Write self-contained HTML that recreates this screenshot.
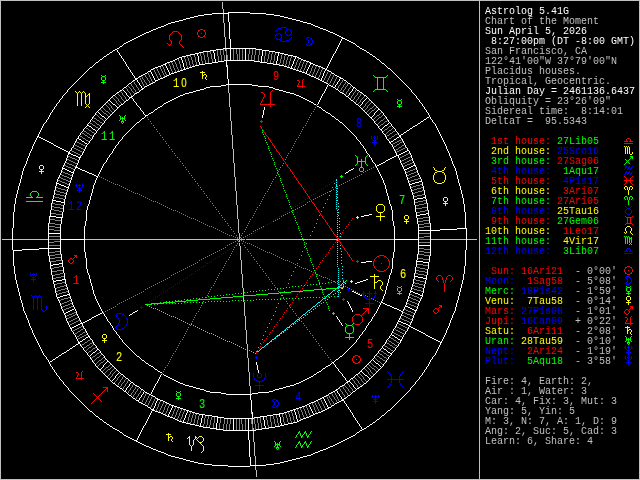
<!DOCTYPE html>
<html><head><meta charset="utf-8"><title>Astrolog 5.41G</title>
<style>
html,body{margin:0;padding:0;background:#000;overflow:hidden}
#w{position:relative;width:640px;height:480px;background:#000;overflow:hidden}
#w svg{position:absolute;left:0;top:0}
#sb{position:absolute;left:485px;top:7.3px;margin:0;font:10px/10px "Liberation Mono",monospace;white-space:pre;color:#c0c0c0;will-change:transform}
#sb div{height:10px}
.cw{color:#ffffff}.cl{color:#c0c0c0}.cr{color:#ff0000}.cy{color:#ffff00}.cgn{color:#00ff00}.cb{color:#0000ff}
.hn{font:13.6px "Liberation Mono",monospace;text-anchor:middle}.hs{font:12.8px "Liberation Sans",sans-serif}
</style></head><body><div id="w">
<svg width="640" height="480" viewBox="0 0 640 480">
<g transform="translate(0,.5)" fill="none" stroke-width="1" shape-rendering="crispEdges">
<path stroke="#ffffff" d="M228 12h22M212 13h17M250 13h16M204 14h8M228 14h1M266 14h8M198 15h6M228 15h1M274 15h6M194 16h4M228 16h1M280 16h4M190 17h4M228 17h1M284 17h4M186 18h4M228 18h1M288 18h4M183 19h3M228 19h1M292 19h4M179 20h4M228 20h1M296 20h4M175 21h4M228 21h1M300 21h3M171 22h4M229 22h1M303 22h4M168 23h3M229 23h1M307 23h4M166 24h2M229 24h1M311 24h2M164 25h2M229 25h1M313 25h2M161 26h3M229 26h1M315 26h3M158 27h3M229 27h1M318 27h2M156 28h2M229 28h1M320 28h3M153 29h3M229 29h1M323 29h3M151 30h2M229 30h1M326 30h2M149 31h2M229 31h1M328 31h2M146 32h3M229 32h1M330 32h3M144 33h2M229 33h1M333 33h2M142 34h2M229 34h1M335 34h2M140 35h2M229 35h1M337 35h2M138 36h2M229 36h1M339 36h2M136 37h2M229 37h1M341 37h2M134 38h2M229 38h1M342 38h3M132 39h2M230 39h1M341 39h1M345 39h2M130 40h2M230 40h1M341 40h1M347 40h2M128 41h2M230 41h1M340 41h1M349 41h2M126 42h2M230 42h1M340 42h1M351 42h2M124 43h2M230 43h1M339 43h1M353 43h2M123 44h1M230 44h1M339 44h1M355 44h1M122 45h1M230 45h1M338 45h1M356 45h1M120 46h2M230 46h1M338 46h1M357 46h2M119 47h1M230 47h1M337 47h1M359 47h1M117 48h2M223 48h33M337 48h1M360 48h2M115 49h2M216 49h7M230 49h1M245 49h1M256 49h6M336 49h1M362 49h2M113 50h2M117 50h1M210 50h6M230 50h1M245 50h1M262 50h7M336 50h1M364 50h2M112 51h1M117 51h1M203 51h7M213 51h1M230 51h1M245 51h1M262 51h1M269 51h6M335 51h1M366 51h1M110 52h2M118 52h1M199 52h4M213 52h1M230 52h1M245 52h1M262 52h1M275 52h5M335 52h1M367 52h2M109 53h1M119 53h1M195 53h4M214 53h1M230 53h1M245 53h1M262 53h1M278 53h1M280 53h4M334 53h1M369 53h1M107 54h2M119 54h1M190 54h5M197 54h1M214 54h1M230 54h1M245 54h1M262 54h1M278 54h1M284 54h4M333 54h1M370 54h2M106 55h1M120 55h1M186 55h4M197 55h1M214 55h1M230 55h1M245 55h1M262 55h1M278 55h1M288 55h5M333 55h1M372 55h1M104 56h2M121 56h1M182 56h4M198 56h1M214 56h1M230 56h1M245 56h1M261 56h1M277 56h1M293 56h4M332 56h1M373 56h2M103 57h1M121 57h1M179 57h3M198 57h1M214 57h1M230 57h1M245 57h1M261 57h1M277 57h1M295 57h1M297 57h2M332 57h1M375 57h1M102 58h1M122 58h1M177 58h2M181 58h1M198 58h1M214 58h1M230 58h1M245 58h1M261 58h1M277 58h1M295 58h1M299 58h2M331 58h1M376 58h1M100 59h2M123 59h1M175 59h2M181 59h1M198 59h1M215 59h1M230 59h1M245 59h1M261 59h1M277 59h1M294 59h1M301 59h2M331 59h1M377 59h2M99 60h1M123 60h1M173 60h2M182 60h1M198 60h1M215 60h1M224 60h30M261 60h1M277 60h1M294 60h1M303 60h3M330 60h1M379 60h1M98 61h1M124 61h1M170 61h3M182 61h1M198 61h1M215 61h1M218 61h6M226 61h1M254 61h6M261 61h1M276 61h1M293 61h1M306 61h3M330 61h1M380 61h1M96 62h2M125 62h1M167 62h3M182 62h1M199 62h1M212 62h6M226 62h1M260 62h7M276 62h1M293 62h1M309 62h2M329 62h1M381 62h1M95 63h1M125 63h1M165 63h2M183 63h1M199 63h1M205 63h7M226 63h1M267 63h6M276 63h1M293 63h1M310 63h3M329 63h1M382 63h2M94 64h1M126 64h1M163 64h3M183 64h1M199 64h6M226 64h1M273 64h6M292 64h1M310 64h1M313 64h2M328 64h1M384 64h1M93 65h1M126 65h1M161 65h2M165 65h1M183 65h1M195 65h4M226 65h1M279 65h5M292 65h1M309 65h1M315 65h3M328 65h1M385 65h1M92 66h1M127 66h1M158 66h3M166 66h1M183 66h1M192 66h3M226 66h1M284 66h3M291 66h1M309 66h1M318 66h3M327 66h1M386 66h1M90 67h2M128 67h1M155 67h3M166 67h1M184 67h1M189 67h3M227 67h1M287 67h3M291 67h1M308 67h1M321 67h2M327 67h1M387 67h1M89 68h1M128 68h1M153 68h2M167 68h1M184 68h1M186 68h3M227 68h1M290 68h3M308 68h1M323 68h2M326 68h1M388 68h2M88 69h1M129 69h1M151 69h2M167 69h1M183 69h3M227 69h1M293 69h3M307 69h1M325 69h2M390 69h1M87 70h1M130 70h1M150 70h1M168 70h1M180 70h3M227 70h1M296 70h3M307 70h1M325 70h1M327 70h2M391 70h1M86 71h1M130 71h1M148 71h3M168 71h1M177 71h3M227 71h1M299 71h3M306 71h1M324 71h1M329 71h2M392 71h1M85 72h1M131 72h1M147 72h1M151 72h1M169 72h1M174 72h3M227 72h1M302 72h3M306 72h1M324 72h1M331 72h1M393 72h1M84 73h1M132 73h1M145 73h2M151 73h1M169 73h1M171 73h3M227 73h1M305 73h2M323 73h1M332 73h2M394 73h1M83 74h1M132 74h1M143 74h2M152 74h1M169 74h2M227 74h1M307 74h2M323 74h1M334 74h1M395 74h1M82 75h1M133 75h1M141 75h2M152 75h1M167 75h2M227 75h1M309 75h2M323 75h1M335 75h2M396 75h1M81 76h1M134 76h1M139 76h2M153 76h1M165 76h2M227 76h1M311 76h3M322 76h1M337 76h2M397 76h1M80 77h1M134 77h1M138 77h1M153 77h1M163 77h2M227 77h1M314 77h2M322 77h1M339 77h2M398 77h1M79 78h1M135 78h3M154 78h1M160 78h3M227 78h1M316 78h2M321 78h1M340 78h3M399 78h1M78 79h1M135 79h2M154 79h1M158 79h2M228 79h1M318 79h2M321 79h1M339 79h1M343 79h1M400 79h1M77 80h1M133 80h2M137 80h1M155 80h3M228 80h1M320 80h2M339 80h1M344 80h2M401 80h1M76 81h1M132 81h1M137 81h1M155 81h1M228 81h1M322 81h2M338 81h1M346 81h1M402 81h1M75 82h1M131 82h1M138 82h1M153 82h2M228 82h1M324 82h2M337 82h1M347 82h1M403 82h1M74 83h1M129 83h2M139 83h1M151 83h2M228 83h1M326 83h2M337 83h1M348 83h2M404 83h1M73 84h1M128 84h1M139 84h1M149 84h2M226 84h26M328 84h1M336 84h1M350 84h1M405 84h1M72 85h1M127 85h1M140 85h1M147 85h2M221 85h5M252 85h6M327 85h1M329 85h2M335 85h1M351 85h1M406 85h1M71 86h1M126 86h1M141 86h1M145 86h2M210 86h11M258 86h11M327 86h1M331 86h2M335 86h1M352 86h1M407 86h1M70 87h1M124 87h2M141 87h1M144 87h1M206 87h4M269 87h4M326 87h1M333 87h2M353 87h2M408 87h1M69 88h1M123 88h1M142 88h2M204 88h2M273 88h2M326 88h1M335 88h1M353 88h1M355 88h1M409 88h1M68 89h1M122 89h1M141 89h2M200 89h4M275 89h4M325 89h1M336 89h2M352 89h1M356 89h1M410 89h1M67 90h1M120 90h2M123 90h1M140 90h1M196 90h4M279 90h4M325 90h1M338 90h1M352 90h1M357 90h2M411 90h1M67 91h1M119 91h1M124 91h1M139 91h1M193 91h3M283 91h3M324 91h1M339 91h1M351 91h1M359 91h1M411 91h1M66 92h1M117 92h2M125 92h1M137 92h2M189 92h4M286 92h4M324 92h1M340 92h2M350 92h1M360 92h2M412 92h1M65 93h1M116 93h1M126 93h1M135 93h2M185 93h4M290 93h4M323 93h1M342 93h2M349 93h1M362 93h1M413 93h1M64 94h1M115 94h1M126 94h1M134 94h1M183 94h2M294 94h2M322 94h1M344 94h1M349 94h1M363 94h1M414 94h1M63 95h1M113 95h2M127 95h1M133 95h1M180 95h3M296 95h3M322 95h1M345 95h1M348 95h1M364 95h2M415 95h1M62 96h1M112 96h1M128 96h1M131 96h2M178 96h2M299 96h2M321 96h1M346 96h2M366 96h1M416 96h1M62 97h1M111 97h1M129 97h3M176 97h2M301 97h2M321 97h1M348 97h1M367 97h1M416 97h1M61 98h1M110 98h1M129 98h1M132 98h1M174 98h2M303 98h2M320 98h1M349 98h1M366 98h1M368 98h1M417 98h1M60 99h1M109 99h1M128 99h1M133 99h1M172 99h2M305 99h2M320 99h1M350 99h1M365 99h1M369 99h1M418 99h1M59 100h1M108 100h2M126 100h2M133 100h1M170 100h2M307 100h2M319 100h1M351 100h2M364 100h1M370 100h1M419 100h1M59 101h1M107 101h1M110 101h1M125 101h1M134 101h1M168 101h2M309 101h2M319 101h1M353 101h1M363 101h1M371 101h1M419 101h1M58 102h1M106 102h1M111 102h1M124 102h1M135 102h1M166 102h2M311 102h2M318 102h1M354 102h1M362 102h1M372 102h1M420 102h1M57 103h1M105 103h1M112 103h1M123 103h1M136 103h1M164 103h2M313 103h1M318 103h1M355 103h1M362 103h1M373 103h1M421 103h1M56 104h1M104 104h1M113 104h2M121 104h2M136 104h1M163 104h1M314 104h2M317 104h1M356 104h2M361 104h1M374 104h1M422 104h1M56 105h1M103 105h1M115 105h1M120 105h1M137 105h1M162 105h1M358 105h1M360 105h1M375 105h1M422 105h1M55 106h1M102 106h1M116 106h1M119 106h1M138 106h1M160 106h2M317 106h2M359 106h1M376 106h1M423 106h1M54 107h1M101 107h1M117 107h2M139 107h1M158 107h2M264 107h1M319 107h2M360 107h1M377 107h1M424 107h1M54 108h1M100 108h1M117 108h1M140 108h1M157 108h1M264 108h1M321 108h1M361 108h1M378 108h1M424 108h1M53 109h1M99 109h1M116 109h1M140 109h1M155 109h2M264 109h1M322 109h1M362 109h1M378 109h2M425 109h1M52 110h1M98 110h1M115 110h1M141 110h1M154 110h1M263 110h1M323 110h2M363 110h1M377 110h1M380 110h1M426 110h1M52 111h1M97 111h1M114 111h1M142 111h1M153 111h1M263 111h1M325 111h1M364 111h1M376 111h1M381 111h1M426 111h1M51 112h1M96 112h1M98 112h1M113 112h1M143 112h1M151 112h2M263 112h1M326 112h2M365 112h1M375 112h1M382 112h1M427 112h1M50 113h1M95 113h1M99 113h1M112 113h1M143 113h1M149 113h2M263 113h1M328 113h2M366 113h1M374 113h1M383 113h1M428 113h1M50 114h1M95 114h1M100 114h1M111 114h1M144 114h1M148 114h1M263 114h1M330 114h1M367 114h1M374 114h1M383 114h1M428 114h1M49 115h1M94 115h1M101 115h1M110 115h1M145 115h3M262 115h1M331 115h1M368 115h1M373 115h1M384 115h1M429 115h1M49 116h1M93 116h1M102 116h2M109 116h1M145 116h1M262 116h1M332 116h2M369 116h1M372 116h1M385 116h1M429 116h1M48 117h1M92 117h1M104 117h1M108 117h1M144 117h1M262 117h1M334 117h1M370 117h2M386 117h1M427 117h2M430 117h1M48 118h1M92 118h1M105 118h1M107 118h1M142 118h2M335 118h1M371 118h1M386 118h1M426 118h1M430 118h1M47 119h1M91 119h1M106 119h1M141 119h1M336 119h2M372 119h1M387 119h1M424 119h2M431 119h1M46 120h1M90 120h1M105 120h1M140 120h1M338 120h1M373 120h1M388 120h1M423 120h1M432 120h1M46 121h1M90 121h1M104 121h1M139 121h1M339 121h1M374 121h1M388 121h1M421 121h2M432 121h1M45 122h1M89 122h1M104 122h1M137 122h2M340 122h2M374 122h1M389 122h1M420 122h1M433 122h1M44 123h1M88 123h1M103 123h1M136 123h1M342 123h1M375 123h1M388 123h1M390 123h1M418 123h2M434 123h1M43 124h1M87 124h1M102 124h1M135 124h1M343 124h1M376 124h1M387 124h1M391 124h1M417 124h1M435 124h1M43 125h1M87 125h2M101 125h1M134 125h1M344 125h1M377 125h1M385 125h2M391 125h1M415 125h2M435 125h1M42 126h1M86 126h1M89 126h2M100 126h1M133 126h1M345 126h1M378 126h1M384 126h1M392 126h1M413 126h2M436 126h1M42 127h1M85 127h1M91 127h1M100 127h1M132 127h1M346 127h1M378 127h1M383 127h1M393 127h1M412 127h1M436 127h1M41 128h1M84 128h1M92 128h1M99 128h1M131 128h1M347 128h1M379 128h1M382 128h1M394 128h1M410 128h2M437 128h1M41 129h1M83 129h1M93 129h2M98 129h1M130 129h1M348 129h1M380 129h2M395 129h1M409 129h1M437 129h1M40 130h1M83 130h1M95 130h1M97 130h1M129 130h1M349 130h1M381 130h1M395 130h1M407 130h2M438 130h1M40 131h1M82 131h1M96 131h1M128 131h1M350 131h1M382 131h1M396 131h1M406 131h1M438 131h1M39 132h1M81 132h1M96 132h1M127 132h1M351 132h1M382 132h1M397 132h1M404 132h2M439 132h1M39 133h1M80 133h1M95 133h1M126 133h1M352 133h1M383 133h1M398 133h1M403 133h1M439 133h1M38 134h1M80 134h1M94 134h1M125 134h1M353 134h1M384 134h1M398 134h1M401 134h2M440 134h1M38 135h1M79 135h1M93 135h1M124 135h1M354 135h1M385 135h1M399 135h2M440 135h1M37 136h2M78 136h1M93 136h1M123 136h1M355 136h1M385 136h1M399 136h2M441 136h1M37 137h1M39 137h2M78 137h1M92 137h1M122 137h1M356 137h1M386 137h1M397 137h2M400 137h1M441 137h1M36 138h1M41 138h2M77 138h2M92 138h1M122 138h1M356 138h1M386 138h1M396 138h1M401 138h1M442 138h1M36 139h1M43 139h2M76 139h1M79 139h2M91 139h1M121 139h1M357 139h1M387 139h1M394 139h2M402 139h1M442 139h1M35 140h1M45 140h2M76 140h1M81 140h1M90 140h1M120 140h1M358 140h1M388 140h1M393 140h1M402 140h1M443 140h1M35 141h1M47 141h2M75 141h1M82 141h2M89 141h1M119 141h1M359 141h1M389 141h1M391 141h2M403 141h1M443 141h1M34 142h1M49 142h2M75 142h1M84 142h1M89 142h1M118 142h1M360 142h1M389 142h2M403 142h1M444 142h1M34 143h1M51 143h2M74 143h1M85 143h2M88 143h1M118 143h1M360 143h1M390 143h1M404 143h1M444 143h1M33 144h1M53 144h1M74 144h1M87 144h1M117 144h1M361 144h1M391 144h1M404 144h1M445 144h1M33 145h1M54 145h2M73 145h1M86 145h1M116 145h1M362 145h1M392 145h1M405 145h1M445 145h1M32 146h1M56 146h2M73 146h1M86 146h1M115 146h1M363 146h1M392 146h1M405 146h1M446 146h1M32 147h1M58 147h2M72 147h1M85 147h1M115 147h1M363 147h1M393 147h1M406 147h1M446 147h1M32 148h1M60 148h2M71 148h1M85 148h1M114 148h1M364 148h1M393 148h1M407 148h1M446 148h1M31 149h1M62 149h2M71 149h1M84 149h1M113 149h1M365 149h1M394 149h1M407 149h1M447 149h1M31 150h1M64 150h2M70 150h1M84 150h1M113 150h1M365 150h1M394 150h1M407 150h2M447 150h1M30 151h1M66 151h2M69 151h1M83 151h1M112 151h1M366 151h1M395 151h1M405 151h2M409 151h1M448 151h1M30 152h1M68 152h2M83 152h1M112 152h1M366 152h1M395 152h1M403 152h2M409 152h1M448 152h1M29 153h1M68 153h3M82 153h1M111 153h1M367 153h1M396 153h1M401 153h2M410 153h1M449 153h1M29 154h1M68 154h1M71 154h2M82 154h1M110 154h1M368 154h1M396 154h1M399 154h2M410 154h1M449 154h1M29 155h1M67 155h1M73 155h3M81 155h1M109 155h1M369 155h1M396 155h3M411 155h1M449 155h1M28 156h1M67 156h1M76 156h2M80 156h1M109 156h1M369 156h1M394 156h2M398 156h1M411 156h1M450 156h1M28 157h1M67 157h1M78 157h3M108 157h1M370 157h1M392 157h2M398 157h1M411 157h1M450 157h1M27 158h1M66 158h1M79 158h1M107 158h1M371 158h1M390 158h2M399 158h1M412 158h1M451 158h1M27 159h1M66 159h1M79 159h1M107 159h1M371 159h1M388 159h2M399 159h1M412 159h1M451 159h1M27 160h1M66 160h1M78 160h1M106 160h1M372 160h1M386 160h2M400 160h1M412 160h1M451 160h1M26 161h1M65 161h1M78 161h1M106 161h1M372 161h1M385 161h1M400 161h1M413 161h1M452 161h1M26 162h1M65 162h1M78 162h1M105 162h1M373 162h1M383 162h2M400 162h1M413 162h1M452 162h1M26 163h1M64 163h1M77 163h1M104 163h1M374 163h1M381 163h2M401 163h1M414 163h1M452 163h1M25 164h1M64 164h1M77 164h1M103 164h1M375 164h1M379 164h2M401 164h1M414 164h1M453 164h1M25 165h1M63 165h1M76 165h1M103 165h1M375 165h1M377 165h2M402 165h1M413 165h3M453 165h1M24 166h1M63 166h1M76 166h1M102 166h1M376 166h1M402 166h1M411 166h2M415 166h1M454 166h1M24 167h1M62 167h1M75 167h3M102 167h1M376 167h1M403 167h1M409 167h2M416 167h1M454 167h1M23 168h1M62 168h3M75 168h1M78 168h2M101 168h1M353 168h1M377 168h1M403 168h1M407 168h2M416 168h1M455 168h1M23 169h1M62 169h1M65 169h2M74 169h1M80 169h2M101 169h1M351 169h2M377 169h1M404 169h3M416 169h1M455 169h1M23 170h1M61 170h1M67 170h2M74 170h1M82 170h3M100 170h1M349 170h2M378 170h1M404 170h1M417 170h1M455 170h1M22 171h1M61 171h1M69 171h2M73 171h1M85 171h2M100 171h1M348 171h1M378 171h1M405 171h1M417 171h1M456 171h1M22 172h1M61 172h1M71 172h3M87 172h2M99 172h1M346 172h2M379 172h1M405 172h1M417 172h1M456 172h1M22 173h1M60 173h1M73 173h1M89 173h3M99 173h1M345 173h1M379 173h1M405 173h1M418 173h1M456 173h1M22 174h1M60 174h1M72 174h1M92 174h2M98 174h1M380 174h1M406 174h1M418 174h1M456 174h1M21 175h1M59 175h1M72 175h1M94 175h2M98 175h1M380 175h1M406 175h1M419 175h1M457 175h1M21 176h1M59 176h1M72 176h1M96 176h2M381 176h1M406 176h1M419 176h1M457 176h1M21 177h1M58 177h1M71 177h1M97 177h1M381 177h1M407 177h1M420 177h1M457 177h1M21 178h1M58 178h1M71 178h1M96 178h1M382 178h1M407 178h1M420 178h1M457 178h1M20 179h1M57 179h1M71 179h1M96 179h1M382 179h1M407 179h1M421 179h1M458 179h1M20 180h1M57 180h1M70 180h1M95 180h1M383 180h1M408 180h1M421 180h1M458 180h1M20 181h1M57 181h1M70 181h1M95 181h1M383 181h1M408 181h1M419 181h3M458 181h1M20 182h1M56 182h1M70 182h1M95 182h1M383 182h1M408 182h1M415 182h4M422 182h1M458 182h1M19 183h1M56 183h3M69 183h1M94 183h1M384 183h1M409 183h1M412 183h3M422 183h1M459 183h1M19 184h1M56 184h1M59 184h2M69 184h1M94 184h1M384 184h1M409 184h3M422 184h1M459 184h1M19 185h1M56 185h1M61 185h3M69 185h1M93 185h1M385 185h1M409 185h1M422 185h1M459 185h1M18 186h1M55 186h1M64 186h2M68 186h1M93 186h1M385 186h1M410 186h1M423 186h1M460 186h1M18 187h1M55 187h1M66 187h3M93 187h1M385 187h1M410 187h1M423 187h1M460 187h1M18 188h1M55 188h1M68 188h1M93 188h1M385 188h1M410 188h1M423 188h1M460 188h1M18 189h1M55 189h1M67 189h1M92 189h1M386 189h1M411 189h1M423 189h1M460 189h1M17 190h1M54 190h1M67 190h1M92 190h1M386 190h1M411 190h1M424 190h1M461 190h1M17 191h1M54 191h1M67 191h1M92 191h1M386 191h1M411 191h1M424 191h1M461 191h1M17 192h1M54 192h1M66 192h1M92 192h1M386 192h1M412 192h1M424 192h1M461 192h1M17 193h1M54 193h1M66 193h1M91 193h1M387 193h1M412 193h1M424 193h1M461 193h1M16 194h1M54 194h1M66 194h1M91 194h1M387 194h1M412 194h1M424 194h1M462 194h1M16 195h1M53 195h1M65 195h1M91 195h1M387 195h1M413 195h1M425 195h1M462 195h1M16 196h1M53 196h1M65 196h1M90 196h1M388 196h1M413 196h1M425 196h1M462 196h1M16 197h1M53 197h1M65 197h1M90 197h1M388 197h1M413 197h1M423 197h3M462 197h1M15 198h1M53 198h1M65 198h1M90 198h1M388 198h1M413 198h1M417 198h6M425 198h1M463 198h1M15 199h1M52 199h1M64 199h1M90 199h1M388 199h1M414 199h3M426 199h1M463 199h1M15 200h1M52 200h4M64 200h1M89 200h1M389 200h1M414 200h1M426 200h1M463 200h1M15 201h1M52 201h1M56 201h5M64 201h1M89 201h1M389 201h1M414 201h1M426 201h1M463 201h1M15 202h1M52 202h1M61 202h4M89 202h1M389 202h1M414 202h1M426 202h1M463 202h1M15 203h1M51 203h1M64 203h1M89 203h1M389 203h1M414 203h1M427 203h1M463 203h1M14 204h1M51 204h1M64 204h1M88 204h1M390 204h1M414 204h1M427 204h1M464 204h1M14 205h1M51 205h1M63 205h1M88 205h1M390 205h1M415 205h1M427 205h1M464 205h1M14 206h1M51 206h1M63 206h1M87 206h1M391 206h1M415 206h1M427 206h1M464 206h1M14 207h1M51 207h1M63 207h1M87 207h1M391 207h1M415 207h1M427 207h1M464 207h1M14 208h1M51 208h1M63 208h1M87 208h1M391 208h1M415 208h1M427 208h1M464 208h1M14 209h1M51 209h1M63 209h1M87 209h1M391 209h1M415 209h1M427 209h1M464 209h1M14 210h1M50 210h1M63 210h1M86 210h1M392 210h1M415 210h1M428 210h1M464 210h1M14 211h1M50 211h1M63 211h1M86 211h1M392 211h1M415 211h1M428 211h1M464 211h1M13 212h1M50 212h1M62 212h1M86 212h1M392 212h1M416 212h1M428 212h1M465 212h1M13 213h1M50 213h1M62 213h1M86 213h1M392 213h1M416 213h1M426 213h3M465 213h1M13 214h1M50 214h1M62 214h1M86 214h1M369 214h3M392 214h1M416 214h1M420 214h6M428 214h1M465 214h1M13 215h1M50 215h1M62 215h1M86 215h1M364 215h5M392 215h1M416 215h4M428 215h1M465 215h1M13 216h1M49 216h7M62 216h1M86 216h1M361 216h3M392 216h1M416 216h1M429 216h1M465 216h1M13 217h1M49 217h1M56 217h7M86 217h1M392 217h1M416 217h1M429 217h1M465 217h1M13 218h1M49 218h1M61 218h1M86 218h1M392 218h1M417 218h1M429 218h1M465 218h1M13 219h1M49 219h1M61 219h1M86 219h1M392 219h1M417 219h1M429 219h1M465 219h1M13 220h1M49 220h1M61 220h1M86 220h1M392 220h1M417 220h1M429 220h1M465 220h1M13 221h1M49 221h1M61 221h1M85 221h1M393 221h1M417 221h1M429 221h1M465 221h1M13 222h1M49 222h1M61 222h1M85 222h1M393 222h1M417 222h1M429 222h1M465 222h1M13 223h1M48 223h1M61 223h1M85 223h1M393 223h1M417 223h1M430 223h1M465 223h1M13 224h1M48 224h1M60 224h1M85 224h1M393 224h1M418 224h1M430 224h1M465 224h1M13 225h1M48 225h1M60 225h1M85 225h1M393 225h1M418 225h1M430 225h1M465 225h1M13 226h1M48 226h1M60 226h1M84 226h1M394 226h1M418 226h1M430 226h1M465 226h1M13 227h1M48 227h1M60 227h1M84 227h1M394 227h1M418 227h1M430 227h1M465 227h1M12 228h1M48 228h1M60 228h1M84 228h1M394 228h1M418 228h1M430 228h1M457 228h10M12 229h1M48 229h1M60 229h1M84 229h1M394 229h1M418 229h1M430 229h1M440 229h17M466 229h1M12 230h1M48 230h1M60 230h1M84 230h1M394 230h1M418 230h22M466 230h1M12 231h1M48 231h1M60 231h1M84 231h1M394 231h1M418 231h1M430 231h1M466 231h1M12 232h1M48 232h1M60 232h1M84 232h1M394 232h1M418 232h1M430 232h1M466 232h1M12 233h1M48 233h13M84 233h1M394 233h1M418 233h1M430 233h1M466 233h1M12 234h1M48 234h1M60 234h1M84 234h1M394 234h1M418 234h1M430 234h1M466 234h1M12 235h1M48 235h1M60 235h1M84 235h1M394 235h1M418 235h1M430 235h1M466 235h1M12 236h1M48 236h1M60 236h1M84 236h1M394 236h1M418 236h1M430 236h1M466 236h1M12 237h1M48 237h1M60 237h1M84 237h1M394 237h1M418 237h1M430 237h1M466 237h1M12 238h1M48 238h1M60 238h1M84 238h1M394 238h1M418 238h1M430 238h1M466 238h1M12 239h1M48 239h1M60 239h25M394 239h25M430 239h1M466 239h1M12 240h1M48 240h1M60 240h1M84 240h1M394 240h1M418 240h1M430 240h1M466 240h1M12 241h1M48 241h1M60 241h1M84 241h1M394 241h1M418 241h1M430 241h1M466 241h1M12 242h1M48 242h1M60 242h1M84 242h1M394 242h1M418 242h1M430 242h1M466 242h1M12 243h1M48 243h1M60 243h1M84 243h1M394 243h1M418 243h1M430 243h1M466 243h1M12 244h1M48 244h1M60 244h1M84 244h1M394 244h1M418 244h1M430 244h1M466 244h1M12 245h1M48 245h1M60 245h1M84 245h1M394 245h1M418 245h13M466 245h1M12 246h1M48 246h1M60 246h1M84 246h1M394 246h1M418 246h1M430 246h1M466 246h1M12 247h1M48 247h1M60 247h1M84 247h1M394 247h1M418 247h1M430 247h1M466 247h1M12 248h1M39 248h22M84 248h1M394 248h1M418 248h1M430 248h1M466 248h1M12 249h1M22 249h17M48 249h1M60 249h1M84 249h1M394 249h1M418 249h1M430 249h1M466 249h1M13 250h9M48 250h1M60 250h1M84 250h1M394 250h1M418 250h1M430 250h1M465 250h1M13 251h1M48 251h1M60 251h1M84 251h1M394 251h1M418 251h1M430 251h1M465 251h1M13 252h1M48 252h1M60 252h1M85 252h1M393 252h1M418 252h1M430 252h1M465 252h1M13 253h1M48 253h1M60 253h1M85 253h1M393 253h1M418 253h1M430 253h1M465 253h1M13 254h1M48 254h1M61 254h1M85 254h1M393 254h1M417 254h1M430 254h1M465 254h1M13 255h1M48 255h1M61 255h1M85 255h1M393 255h1M417 255h1M430 255h1M465 255h1M13 256h1M49 256h1M61 256h1M85 256h1M393 256h1M417 256h1M429 256h1M465 256h1M13 257h1M49 257h1M61 257h1M85 257h1M393 257h1M417 257h1M429 257h1M465 257h1M13 258h1M49 258h1M61 258h1M86 258h1M392 258h1M417 258h1M429 258h1M465 258h1M13 259h1M49 259h1M61 259h1M86 259h1M392 259h1M417 259h1M429 259h1M465 259h1M13 260h1M49 260h1M62 260h1M86 260h1M392 260h1M416 260h1M429 260h1M465 260h1M13 261h1M49 261h1M62 261h1M86 261h1M366 261h6M392 261h1M416 261h7M429 261h1M465 261h1M13 262h1M50 262h1M62 262h1M86 262h1M361 262h5M392 262h1M416 262h1M423 262h6M465 262h1M13 263h1M50 263h1M59 263h4M86 263h1M392 263h1M416 263h1M428 263h1M465 263h1M13 264h1M50 264h1M53 264h6M62 264h1M86 264h1M392 264h1M416 264h1M428 264h1M465 264h1M13 265h1M50 265h3M62 265h1M86 265h1M392 265h1M416 265h1M428 265h1M465 265h1M14 266h1M50 266h1M62 266h1M86 266h1M392 266h1M416 266h1M428 266h1M464 266h1M14 267h1M50 267h1M63 267h1M86 267h1M392 267h1M415 267h1M428 267h1M464 267h1M14 268h1M50 268h1M63 268h1M86 268h1M392 268h1M415 268h1M428 268h1M464 268h1M14 269h1M51 269h1M63 269h1M87 269h1M391 269h1M415 269h1M427 269h1M464 269h1M14 270h1M51 270h1M63 270h1M87 270h1M391 270h1M415 270h1M427 270h1M464 270h1M14 271h1M51 271h1M63 271h1M87 271h1M391 271h1M415 271h1M427 271h1M464 271h1M14 272h1M51 272h1M63 272h1M87 272h1M391 272h1M415 272h1M427 272h1M464 272h1M14 273h1M51 273h1M64 273h1M88 273h1M390 273h1M414 273h1M427 273h1M464 273h1M15 274h1M51 274h1M64 274h1M88 274h1M390 274h1M414 274h1M427 274h1M463 274h1M15 275h1M52 275h1M64 275h1M89 275h1M389 275h1M414 275h1M426 275h1M463 275h1M15 276h1M52 276h1M64 276h1M89 276h1M389 276h1M414 276h4M426 276h1M463 276h1M15 277h1M52 277h1M64 277h1M89 277h1M389 277h1M414 277h1M418 277h5M426 277h1M463 277h1M15 278h1M52 278h1M64 278h1M89 278h1M389 278h1M414 278h1M423 278h4M463 278h1M15 279h1M52 279h1M62 279h4M90 279h1M366 279h2M388 279h1M413 279h1M426 279h1M463 279h1M16 280h1M53 280h1M56 280h6M65 280h1M90 280h1M363 280h3M388 280h1M413 280h1M425 280h1M462 280h1M16 281h1M53 281h3M65 281h1M90 281h1M360 281h3M388 281h1M413 281h1M425 281h1M462 281h1M16 282h1M53 282h1M65 282h1M90 282h1M357 282h3M388 282h1M413 282h1M425 282h1M462 282h1M16 283h1M53 283h1M65 283h1M91 283h1M355 283h2M387 283h1M413 283h1M425 283h1M462 283h1M17 284h1M54 284h1M66 284h1M91 284h1M387 284h1M412 284h1M424 284h1M461 284h1M17 285h1M54 285h1M66 285h1M91 285h1M387 285h1M412 285h1M424 285h1M461 285h1M17 286h1M54 286h1M66 286h1M92 286h1M386 286h1M412 286h1M424 286h1M461 286h1M17 287h1M54 287h1M67 287h1M92 287h1M386 287h1M411 287h1M424 287h1M461 287h1M18 288h1M55 288h1M67 288h1M92 288h1M386 288h1M411 288h1M423 288h1M460 288h1M18 289h1M55 289h1M67 289h1M92 289h1M386 289h1M411 289h1M423 289h1M460 289h1M18 290h1M55 290h1M68 290h1M93 290h1M385 290h1M410 290h1M423 290h1M460 290h1M18 291h1M55 291h1M68 291h1M93 291h1M352 291h2M385 291h1M410 291h3M423 291h1M460 291h1M19 292h1M55 292h1M68 292h1M93 292h1M354 292h2M385 292h1M410 292h1M413 292h2M423 292h1M459 292h1M19 293h1M56 293h1M69 293h1M93 293h1M356 293h2M385 293h1M409 293h1M415 293h3M422 293h1M459 293h1M19 294h1M56 294h1M67 294h3M94 294h1M358 294h2M384 294h1M409 294h1M418 294h2M422 294h1M459 294h1M19 295h1M56 295h1M63 295h4M69 295h1M94 295h1M360 295h2M384 295h1M409 295h1M420 295h3M459 295h1M20 296h1M56 296h1M60 296h3M70 296h1M95 296h1M383 296h1M408 296h1M422 296h1M458 296h1M20 297h1M57 297h3M70 297h1M95 297h1M383 297h1M408 297h1M421 297h1M458 297h1M20 298h1M57 298h1M70 298h1M95 298h1M383 298h1M408 298h1M421 298h1M458 298h1M20 299h1M58 299h1M71 299h1M96 299h1M382 299h1M407 299h1M420 299h1M458 299h1M21 300h1M58 300h1M71 300h1M96 300h1M382 300h1M407 300h1M420 300h1M457 300h1M21 301h1M59 301h1M71 301h1M97 301h1M347 301h1M381 301h1M407 301h1M419 301h1M457 301h1M21 302h1M59 302h1M72 302h1M97 302h1M348 302h1M381 302h2M406 302h1M419 302h1M457 302h1M22 303h1M60 303h1M72 303h1M98 303h1M348 303h1M380 303h1M383 303h2M406 303h1M418 303h1M456 303h1M22 304h1M60 304h1M72 304h1M98 304h1M349 304h1M380 304h1M385 304h2M406 304h1M418 304h1M456 304h1M22 305h1M60 305h1M73 305h1M99 305h1M349 305h1M379 305h1M387 305h3M405 305h1M418 305h1M456 305h1M22 306h1M61 306h1M73 306h1M99 306h1M350 306h1M379 306h1M390 306h2M405 306h3M417 306h1M456 306h1M23 307h1M61 307h1M74 307h1M100 307h1M350 307h1M378 307h1M392 307h2M404 307h1M408 307h2M417 307h1M455 307h1M23 308h1M61 308h1M74 308h1M100 308h1M351 308h1M378 308h1M394 308h3M404 308h1M410 308h2M417 308h1M455 308h1M23 309h1M62 309h1M72 309h2M75 309h1M101 309h1M351 309h1M377 309h1M397 309h2M403 309h1M412 309h2M416 309h1M455 309h1M23 310h1M62 310h1M70 310h2M75 310h1M101 310h1M137 310h1M352 310h1M377 310h1M399 310h2M403 310h1M414 310h3M455 310h1M24 311h1M63 311h1M68 311h2M76 311h1M102 311h1M135 311h2M352 311h1M376 311h1M401 311h2M415 311h1M454 311h1M24 312h1M63 312h1M66 312h2M76 312h1M102 312h1M133 312h2M376 312h1M402 312h1M415 312h1M454 312h1M25 313h1M64 313h2M76 313h1M100 313h2M103 313h1M132 313h1M375 313h1M402 313h1M414 313h1M453 313h1M25 314h1M64 314h1M77 314h1M98 314h2M104 314h1M130 314h2M374 314h1M401 314h1M414 314h1M453 314h1M26 315h1M65 315h1M77 315h1M96 315h2M104 315h1M129 315h1M374 315h1M401 315h1M413 315h1M452 315h1M26 316h1M65 316h1M78 316h1M94 316h2M105 316h1M336 316h1M373 316h1M400 316h1M413 316h1M452 316h1M26 317h1M65 317h1M78 317h1M92 317h2M106 317h1M337 317h1M372 317h1M400 317h1M413 317h1M452 317h1M27 318h1M66 318h1M79 318h1M91 318h1M106 318h1M337 318h1M372 318h1M399 318h1M412 318h1M451 318h1M27 319h1M66 319h1M79 319h1M89 319h2M107 319h1M338 319h1M371 319h1M399 319h1M412 319h1M451 319h1M28 320h1M66 320h1M80 320h1M87 320h2M107 320h1M339 320h1M371 320h1M398 320h1M412 320h1M450 320h1M28 321h1M67 321h1M80 321h1M85 321h2M108 321h1M339 321h1M370 321h1M398 321h3M411 321h1M450 321h1M28 322h1M67 322h1M81 322h1M83 322h2M109 322h1M340 322h1M369 322h1M397 322h1M401 322h2M411 322h1M450 322h1M29 323h1M68 323h1M80 323h3M110 323h1M341 323h1M368 323h1M397 323h1M403 323h3M410 323h1M449 323h1M29 324h1M68 324h1M78 324h2M82 324h1M110 324h1M341 324h1M368 324h1M396 324h1M406 324h2M410 324h1M449 324h1M29 325h1M69 325h1M76 325h2M82 325h1M111 325h1M342 325h1M367 325h1M396 325h1M408 325h2M449 325h1M30 326h1M69 326h1M74 326h2M83 326h1M112 326h1M366 326h1M395 326h1M409 326h2M448 326h1M30 327h1M70 327h1M72 327h2M83 327h1M112 327h1M366 327h1M395 327h1M408 327h1M411 327h2M448 327h1M31 328h1M70 328h2M84 328h1M113 328h1M365 328h1M394 328h1M408 328h1M413 328h2M447 328h1M31 329h1M71 329h1M85 329h1M113 329h1M365 329h1M393 329h1M407 329h1M415 329h2M447 329h1M32 330h1M71 330h1M85 330h1M114 330h1M364 330h1M393 330h1M407 330h1M417 330h2M446 330h1M32 331h1M72 331h1M86 331h1M115 331h1M363 331h1M392 331h1M406 331h1M419 331h2M446 331h1M32 332h1M73 332h1M86 332h1M116 332h1M362 332h1M392 332h1M405 332h1M421 332h2M446 332h1M33 333h1M73 333h1M87 333h1M116 333h1M362 333h1M391 333h1M405 333h1M423 333h2M445 333h1M33 334h1M74 334h1M87 334h1M117 334h1M361 334h1M391 334h1M404 334h1M425 334h1M445 334h1M34 335h1M75 335h1M88 335h1M118 335h1M360 335h1M390 335h1M392 335h2M403 335h1M426 335h2M444 335h1M34 336h1M75 336h1M88 336h2M119 336h1M359 336h1M389 336h1M394 336h1M403 336h1M428 336h2M444 336h1M35 337h1M76 337h1M86 337h2M89 337h1M119 337h1M359 337h1M389 337h1M395 337h2M402 337h1M430 337h2M443 337h1M35 338h1M76 338h1M85 338h1M90 338h1M120 338h1M358 338h1M388 338h1M397 338h1M402 338h1M432 338h2M443 338h1M36 339h1M77 339h1M83 339h2M91 339h1M121 339h1M357 339h1M387 339h1M398 339h2M401 339h1M434 339h2M442 339h1M36 340h1M77 340h1M82 340h1M92 340h1M122 340h1M356 340h1M386 340h1M400 340h2M436 340h2M442 340h1M37 341h1M78 341h1M80 341h2M92 341h1M122 341h1M356 341h1M386 341h1M400 341h1M438 341h2M441 341h1M37 342h1M78 342h2M93 342h1M123 342h1M355 342h1M385 342h1M400 342h1M440 342h2M38 343h1M78 343h2M93 343h1M124 343h1M354 343h1M385 343h1M399 343h1M440 343h1M38 344h1M76 344h2M80 344h1M94 344h1M125 344h1M353 344h1M384 344h1M398 344h1M440 344h1M39 345h1M75 345h1M80 345h1M95 345h1M126 345h1M352 345h1M383 345h1M398 345h1M439 345h1M39 346h1M73 346h2M81 346h1M96 346h1M127 346h1M351 346h1M382 346h1M397 346h1M439 346h1M40 347h1M72 347h1M82 347h1M96 347h1M128 347h1M350 347h1M382 347h1M396 347h1M438 347h1M40 348h1M70 348h2M83 348h1M97 348h1M129 348h1M349 348h1M381 348h1M383 348h1M395 348h1M438 348h1M41 349h1M69 349h1M83 349h1M97 349h2M130 349h1M348 349h1M380 349h1M384 349h2M395 349h1M437 349h1M41 350h1M67 350h2M84 350h1M96 350h1M99 350h1M131 350h1M347 350h1M379 350h1M386 350h1M394 350h1M437 350h1M42 351h1M66 351h1M85 351h1M95 351h1M100 351h1M132 351h1M346 351h1M378 351h1M387 351h1M393 351h1M436 351h1M42 352h1M64 352h2M86 352h1M93 352h2M100 352h1M133 352h1M345 352h1M378 352h1M388 352h2M392 352h1M436 352h1M43 353h1M62 353h2M87 353h1M92 353h1M101 353h1M134 353h1M344 353h1M377 353h1M390 353h2M435 353h1M43 354h1M61 354h1M87 354h1M91 354h1M102 354h1M135 354h1M343 354h1M376 354h1M391 354h1M435 354h1M44 355h1M59 355h2M88 355h1M90 355h1M103 355h1M136 355h1M342 355h1M375 355h1M390 355h1M434 355h1M45 356h1M58 356h1M89 356h1M104 356h1M137 356h2M340 356h2M374 356h1M389 356h1M433 356h1M46 357h1M56 357h2M90 357h1M104 357h1M139 357h1M339 357h1M374 357h1M388 357h1M432 357h1M46 358h1M55 358h1M90 358h1M105 358h1M140 358h1M338 358h1M373 358h1M388 358h1M432 358h1M47 359h1M53 359h2M91 359h1M106 359h1M141 359h1M336 359h2M372 359h1M387 359h1M431 359h1M48 360h1M52 360h1M92 360h1M107 360h1M142 360h2M335 360h1M371 360h1M373 360h1M386 360h1M430 360h1M48 361h1M50 361h2M92 361h1M107 361h2M144 361h1M334 361h1M370 361h1M374 361h1M386 361h1M430 361h1M49 362h1M93 362h1M106 362h1M109 362h1M145 362h1M256 362h1M332 362h2M369 362h1M375 362h1M385 362h1M429 362h1M49 363h1M94 363h1M105 363h1M110 363h1M146 363h2M256 363h1M331 363h1M333 363h1M368 363h1M376 363h2M384 363h1M429 363h1M50 364h1M95 364h1M104 364h1M111 364h1M148 364h1M256 364h1M330 364h1M334 364h1M367 364h1M378 364h1M383 364h1M428 364h1M50 365h1M95 365h1M103 365h1M112 365h1M149 365h2M257 365h1M328 365h2M335 365h1M366 365h1M379 365h1M383 365h1M428 365h1M51 366h1M96 366h1M103 366h1M113 366h1M151 366h2M257 366h1M326 366h2M335 366h1M365 366h1M380 366h1M382 366h1M427 366h1M52 367h1M97 367h1M102 367h1M114 367h1M153 367h1M257 367h1M325 367h1M336 367h1M364 367h1M381 367h1M426 367h1M52 368h1M98 368h1M101 368h1M115 368h1M154 368h1M257 368h1M323 368h2M337 368h1M363 368h1M380 368h1M426 368h1M53 369h1M99 369h2M116 369h1M155 369h2M257 369h1M322 369h1M338 369h1M362 369h1M379 369h1M425 369h1M54 370h1M100 370h1M117 370h1M157 370h1M258 370h1M321 370h1M338 370h1M361 370h1M378 370h1M424 370h1M54 371h1M101 371h1M118 371h1M158 371h2M258 371h1M319 371h2M339 371h1M360 371h2M377 371h1M424 371h1M55 372h1M102 372h1M119 372h1M160 372h2M258 372h1M317 372h2M340 372h1M359 372h1M362 372h1M376 372h1M423 372h1M56 373h1M103 373h1M118 373h1M120 373h1M316 373h1M341 373h1M358 373h1M363 373h1M375 373h1M422 373h1M56 374h1M104 374h1M117 374h1M121 374h2M161 374h1M163 374h1M314 374h2M342 374h1M356 374h2M364 374h1M374 374h1M422 374h1M57 375h1M105 375h1M116 375h1M123 375h1M160 375h1M164 375h2M313 375h1M342 375h1M355 375h1M365 375h2M373 375h1M421 375h1M58 376h1M106 376h1M115 376h1M124 376h1M160 376h1M166 376h2M311 376h2M343 376h1M354 376h1M367 376h1M372 376h1M420 376h1M59 377h1M107 377h1M115 377h1M125 377h1M159 377h1M168 377h2M309 377h2M344 377h1M353 377h1M368 377h1M371 377h1M419 377h1M59 378h1M108 378h1M114 378h1M126 378h2M159 378h1M170 378h2M307 378h2M345 378h1M351 378h2M369 378h2M419 378h1M60 379h1M109 379h1M113 379h1M128 379h1M158 379h1M172 379h2M305 379h2M345 379h1M350 379h1M369 379h1M418 379h1M61 380h1M110 380h1M112 380h1M129 380h1M158 380h1M174 380h2M303 380h2M346 380h1M349 380h1M368 380h1M417 380h1M62 381h1M111 381h1M130 381h1M157 381h1M176 381h2M301 381h2M347 381h3M367 381h1M416 381h1M63 382h1M112 382h1M131 382h2M157 382h1M178 382h2M299 382h2M346 382h2M350 382h1M366 382h1M415 382h1M63 383h1M113 383h2M130 383h1M133 383h1M156 383h1M180 383h3M296 383h3M345 383h1M351 383h1M364 383h2M415 383h1M64 384h1M115 384h1M129 384h1M134 384h1M155 384h1M183 384h2M294 384h2M344 384h1M352 384h1M363 384h1M414 384h1M65 385h1M116 385h1M129 385h1M135 385h2M155 385h1M185 385h4M290 385h4M342 385h2M353 385h1M362 385h1M413 385h1M66 386h1M117 386h2M128 386h1M137 386h2M154 386h1M189 386h4M286 386h4M340 386h2M353 386h1M360 386h2M412 386h1M67 387h1M119 387h1M127 387h1M139 387h1M154 387h1M193 387h3M283 387h3M339 387h1M354 387h1M359 387h1M411 387h1M68 388h1M120 388h2M126 388h1M140 388h1M153 388h1M196 388h4M279 388h4M338 388h1M355 388h1M357 388h2M410 388h1M68 389h1M122 389h1M126 389h1M141 389h2M153 389h1M200 389h4M275 389h4M336 389h2M356 389h1M410 389h1M69 390h1M123 390h1M125 390h1M143 390h1M152 390h1M204 390h2M273 390h2M335 390h2M355 390h1M409 390h1M70 391h1M124 391h2M144 391h1M152 391h1M206 391h4M269 391h4M333 391h2M337 391h1M353 391h2M408 391h1M71 392h1M126 392h1M143 392h1M145 392h2M151 392h1M210 392h11M258 392h11M331 392h2M337 392h1M352 392h1M407 392h1M72 393h1M127 393h1M143 393h1M147 393h2M151 393h1M221 393h5M252 393h6M329 393h2M338 393h1M351 393h1M406 393h1M73 394h1M128 394h1M142 394h1M149 394h2M226 394h26M328 394h1M339 394h1M350 394h1M405 394h1M74 395h1M129 395h2M141 395h1M151 395h2M250 395h1M326 395h2M339 395h1M348 395h2M404 395h1M75 396h1M131 396h1M141 396h1M153 396h2M250 396h1M324 396h2M340 396h1M347 396h1M403 396h1M76 397h1M132 397h1M140 397h1M155 397h1M250 397h1M322 397h2M341 397h1M346 397h1M402 397h1M77 398h1M133 398h2M139 398h1M156 398h2M250 398h1M320 398h2M323 398h1M341 398h1M344 398h2M401 398h1M78 399h1M135 399h1M139 399h1M157 399h3M250 399h1M318 399h2M324 399h1M342 399h2M400 399h1M79 400h1M136 400h3M157 400h1M160 400h3M251 400h1M316 400h2M324 400h1M341 400h3M399 400h1M80 401h1M138 401h1M156 401h1M163 401h2M251 401h1M314 401h2M325 401h1M339 401h2M344 401h1M398 401h1M81 402h1M139 402h2M156 402h1M165 402h2M251 402h1M311 402h3M325 402h1M337 402h2M344 402h1M397 402h1M82 403h1M141 403h2M155 403h1M167 403h2M251 403h1M309 403h2M326 403h1M335 403h2M345 403h1M396 403h1M83 404h1M143 404h2M155 404h1M169 404h2M251 404h1M307 404h2M326 404h1M334 404h1M346 404h1M395 404h1M84 405h1M145 405h2M155 405h1M171 405h3M251 405h1M305 405h2M309 405h1M327 405h1M332 405h2M346 405h1M394 405h1M85 406h1M147 406h1M154 406h1M172 406h1M174 406h3M251 406h1M302 406h3M309 406h1M327 406h1M331 406h1M347 406h1M393 406h1M86 407h1M148 407h2M154 407h1M172 407h1M177 407h3M251 407h1M299 407h3M310 407h1M328 407h3M348 407h1M392 407h1M87 408h1M150 408h1M153 408h1M171 408h1M180 408h3M251 408h1M296 408h3M310 408h1M327 408h2M348 408h1M391 408h1M88 409h1M151 409h3M171 409h1M183 409h3M251 409h1M293 409h3M311 409h1M325 409h2M349 409h1M390 409h1M89 410h1M152 410h3M170 410h1M186 410h3M251 410h1M290 410h3M294 410h1M311 410h1M323 410h2M350 410h1M388 410h2M90 411h2M151 411h1M155 411h3M170 411h1M187 411h1M189 411h3M251 411h1M287 411h3M294 411h1M312 411h1M321 411h2M350 411h1M387 411h1M92 412h1M151 412h1M158 412h3M169 412h1M187 412h1M192 412h3M252 412h1M284 412h3M295 412h1M312 412h1M318 412h3M351 412h1M386 412h1M93 413h1M150 413h1M161 413h2M169 413h1M186 413h1M195 413h4M252 413h1M279 413h5M295 413h1M313 413h1M315 413h3M352 413h1M385 413h1M94 414h1M150 414h1M163 414h2M168 414h1M186 414h1M199 414h6M252 414h1M273 414h7M295 414h1M313 414h2M352 414h1M384 414h1M95 415h1M149 415h1M165 415h2M168 415h1M185 415h1M202 415h1M205 415h7M252 415h1M267 415h6M279 415h1M296 415h1M311 415h2M353 415h1M382 415h2M96 416h2M149 416h1M167 416h3M185 416h1M202 416h1M212 416h6M252 416h1M260 416h7M279 416h1M296 416h1M309 416h2M353 416h1M381 416h1M98 417h1M148 417h1M170 417h3M185 417h1M202 417h1M217 417h7M252 417h1M254 417h6M263 417h1M280 417h1M296 417h1M306 417h3M354 417h1M380 417h1M99 418h1M148 418h1M173 418h2M184 418h1M201 418h1M217 418h1M224 418h30M263 418h1M280 418h1M296 418h1M303 418h3M355 418h1M379 418h1M100 419h2M147 419h1M175 419h2M184 419h1M201 419h1M217 419h1M233 419h1M248 419h1M263 419h1M280 419h1M297 419h1M301 419h2M355 419h1M377 419h2M102 420h1M147 420h1M177 420h2M183 420h1M201 420h1M217 420h1M233 420h1M248 420h1M264 420h1M280 420h1M297 420h1M299 420h2M356 420h1M376 420h1M103 421h1M146 421h1M179 421h3M183 421h1M201 421h1M217 421h1M233 421h1M248 421h1M264 421h1M280 421h1M297 421h2M357 421h1M375 421h1M104 422h2M146 422h1M182 422h4M201 422h1M217 422h1M233 422h1M248 422h1M264 422h1M280 422h1M293 422h4M357 422h1M373 422h2M106 423h1M145 423h1M186 423h4M200 423h1M216 423h1M233 423h1M248 423h1M264 423h1M281 423h1M288 423h5M358 423h1M372 423h1M107 424h2M145 424h1M190 424h5M200 424h1M216 424h1M233 424h1M248 424h1M264 424h1M281 424h1M284 424h4M359 424h1M370 424h2M109 425h1M144 425h1M195 425h4M200 425h1M216 425h1M233 425h1M248 425h1M264 425h1M280 425h4M359 425h1M369 425h1M110 426h2M143 426h1M199 426h4M216 426h1M233 426h1M248 426h1M265 426h1M275 426h5M360 426h1M367 426h2M112 427h1M143 427h1M203 427h7M216 427h1M233 427h1M248 427h1M265 427h1M269 427h6M361 427h1M366 427h1M113 428h2M142 428h1M210 428h7M233 428h1M248 428h1M262 428h7M361 428h1M364 428h2M115 429h2M142 429h1M216 429h7M233 429h1M248 429h1M256 429h6M362 429h2M117 430h2M141 430h1M223 430h33M360 430h2M119 431h1M141 431h1M248 431h1M359 431h1M120 432h2M140 432h1M248 432h1M357 432h2M122 433h1M140 433h1M248 433h1M356 433h1M123 434h1M139 434h1M248 434h1M355 434h1M124 435h2M139 435h1M248 435h1M353 435h2M126 436h2M138 436h1M248 436h1M351 436h2M128 437h2M138 437h1M248 437h1M349 437h2M130 438h2M137 438h1M248 438h1M347 438h2M132 439h2M137 439h1M248 439h1M345 439h2M134 440h3M249 440h1M343 440h2M136 441h2M249 441h1M341 441h2M138 442h2M249 442h1M339 442h2M140 443h2M249 443h1M337 443h2M142 444h2M249 444h1M335 444h2M144 445h2M249 445h1M333 445h2M146 446h3M249 446h1M330 446h3M149 447h2M249 447h1M328 447h2M151 448h2M249 448h1M326 448h2M153 449h3M249 449h1M323 449h3M156 450h2M249 450h1M320 450h3M158 451h3M249 451h1M318 451h2M161 452h3M249 452h1M315 452h3M164 453h2M249 453h1M313 453h2M166 454h2M249 454h1M311 454h2M168 455h3M249 455h1M307 455h4M171 456h4M249 456h1M303 456h4M175 457h4M250 457h1M300 457h3M179 458h4M250 458h1M296 458h4M183 459h3M250 459h1M292 459h4M186 460h4M250 460h1M288 460h4M190 461h4M250 461h1M284 461h4M194 462h4M250 462h1M280 462h4M198 463h6M250 463h1M274 463h6M204 464h8M250 464h1M266 464h8M212 465h16M250 465h16M228 466h22"/>
<path stroke="#c0c0c0" d="M0 0h640M0 1h1M479 1h1M639 1h1M0 2h1M222 2h1M479 2h1M639 2h1M0 3h1M222 3h1M479 3h1M639 3h1M0 4h1M222 4h1M479 4h1M639 4h1M0 5h1M222 5h1M479 5h1M639 5h1M0 6h1M222 6h1M479 6h1M639 6h1M0 7h1M222 7h1M479 7h1M639 7h1M0 8h1M222 8h1M479 8h1M639 8h1M0 9h1M223 9h1M479 9h1M639 9h1M0 10h1M223 10h1M479 10h1M639 10h1M0 11h1M223 11h1M479 11h1M639 11h1M0 12h1M223 12h1M479 12h1M639 12h1M0 13h1M479 13h1M639 13h1M0 14h1M223 14h1M479 14h1M639 14h1M0 15h1M223 15h1M479 15h1M639 15h1M0 16h1M223 16h1M479 16h1M639 16h1M0 17h1M223 17h1M479 17h1M639 17h1M0 18h1M223 18h1M479 18h1M639 18h1M0 19h1M223 19h1M479 19h1M639 19h1M0 20h1M223 20h1M479 20h1M639 20h1M0 21h1M223 21h1M479 21h1M639 21h1M0 22h1M223 22h1M479 22h1M639 22h1M0 23h1M224 23h1M479 23h1M639 23h1M0 24h1M224 24h1M479 24h1M639 24h1M0 25h1M224 25h1M479 25h1M639 25h1M0 26h1M224 26h1M479 26h1M639 26h1M0 27h1M224 27h1M479 27h1M639 27h1M0 28h1M224 28h1M479 28h1M639 28h1M0 29h1M224 29h1M479 29h1M639 29h1M0 30h1M224 30h1M479 30h1M639 30h1M0 31h1M224 31h1M479 31h1M639 31h1M0 32h1M224 32h1M479 32h1M639 32h1M0 33h1M224 33h1M479 33h1M639 33h1M0 34h1M224 34h1M479 34h1M639 34h1M0 35h1M224 35h1M479 35h1M639 35h1M0 36h1M224 36h1M479 36h1M639 36h1M0 37h1M225 37h1M479 37h1M639 37h1M0 38h1M225 38h1M479 38h1M639 38h1M0 39h1M225 39h1M479 39h1M639 39h1M0 40h1M225 40h1M479 40h1M639 40h1M0 41h1M225 41h1M479 41h1M639 41h1M0 42h1M225 42h1M479 42h1M639 42h1M0 43h1M225 43h1M479 43h1M639 43h1M0 44h1M225 44h1M479 44h1M639 44h1M0 45h1M225 45h1M479 45h1M639 45h1M0 46h1M225 46h1M479 46h1M639 46h1M0 47h1M225 47h1M479 47h1M639 47h1M0 48h1M479 48h1M639 48h1M0 49h1M225 49h1M479 49h1M639 49h1M0 50h1M225 50h1M479 50h1M639 50h1M0 51h1M479 51h1M639 51h1M0 52h1M479 52h1M639 52h1M0 53h1M479 53h1M639 53h1M0 54h1M479 54h1M639 54h1M0 55h1M226 55h1M479 55h1M639 55h1M0 56h1M226 56h1M479 56h1M639 56h1M0 57h1M226 57h1M479 57h1M639 57h1M0 58h1M226 58h1M479 58h1M639 58h1M0 59h1M226 59h1M479 59h1M639 59h1M0 60h1M479 60h1M639 60h1M0 61h1M479 61h1M639 61h1M0 62h1M479 62h1M639 62h1M0 63h1M479 63h1M639 63h1M0 64h1M479 64h1M639 64h1M0 65h1M227 65h1M479 65h1M639 65h1M0 66h1M227 66h1M479 66h1M639 66h1M0 67h1M479 67h1M639 67h1M0 68h1M479 68h1M639 68h1M0 69h1M479 69h1M639 69h1M0 70h1M479 70h1M639 70h1M0 71h1M479 71h1M639 71h1M0 72h1M479 72h1M639 72h1M0 73h1M479 73h1M639 73h1M0 74h1M479 74h1M639 74h1M0 75h1M479 75h1M639 75h1M0 76h1M479 76h1M639 76h1M0 77h1M479 77h1M639 77h1M0 78h1M479 78h1M639 78h1M0 79h1M479 79h1M639 79h1M0 80h1M479 80h1M639 80h1M0 81h1M479 81h1M639 81h1M0 82h1M479 82h1M639 82h1M0 83h1M479 83h1M639 83h1M0 84h1M479 84h1M639 84h1M0 85h1M228 85h1M479 85h1M639 85h1M0 86h1M228 86h1M479 86h1M639 86h1M0 87h1M228 87h1M479 87h1M639 87h1M0 88h1M228 88h1M479 88h1M639 88h1M0 89h1M228 89h1M479 89h1M639 89h1M0 90h1M228 90h1M479 90h1M639 90h1M0 91h1M228 91h1M479 91h1M639 91h1M0 92h1M228 92h1M479 92h1M639 92h1M0 93h1M229 93h1M479 93h1M639 93h1M0 94h1M229 94h1M479 94h1M639 94h1M0 95h1M229 95h1M479 95h1M639 95h1M0 96h1M229 96h1M479 96h1M639 96h1M0 97h1M229 97h1M479 97h1M639 97h1M0 98h1M229 98h1M479 98h1M639 98h1M0 99h1M229 99h1M479 99h1M639 99h1M0 100h1M229 100h1M479 100h1M639 100h1M0 101h1M229 101h1M479 101h1M639 101h1M0 102h1M229 102h1M479 102h1M639 102h1M0 103h1M229 103h1M479 103h1M639 103h1M0 104h1M229 104h1M479 104h1M639 104h1M0 105h1M229 105h1M479 105h1M639 105h1M0 106h1M229 106h1M479 106h1M639 106h1M0 107h1M230 107h1M479 107h1M639 107h1M0 108h1M230 108h1M479 108h1M639 108h1M0 109h1M230 109h1M479 109h1M639 109h1M0 110h1M230 110h1M479 110h1M639 110h1M0 111h1M230 111h1M479 111h1M639 111h1M0 112h1M230 112h1M479 112h1M639 112h1M0 113h1M230 113h1M479 113h1M639 113h1M0 114h1M230 114h1M479 114h1M639 114h1M0 115h1M230 115h1M479 115h1M639 115h1M0 116h1M230 116h1M479 116h1M639 116h1M0 117h1M230 117h1M479 117h1M639 117h1M0 118h1M230 118h1M479 118h1M639 118h1M0 119h1M230 119h1M479 119h1M639 119h1M0 120h1M230 120h1M479 120h1M639 120h1M0 121h1M231 121h1M479 121h1M639 121h1M0 122h1M231 122h1M479 122h1M639 122h1M0 123h1M231 123h1M479 123h1M639 123h1M0 124h1M231 124h1M479 124h1M639 124h1M0 125h1M231 125h1M479 125h1M639 125h1M0 126h1M231 126h1M479 126h1M639 126h1M0 127h1M231 127h1M479 127h1M639 127h1M0 128h1M231 128h1M479 128h1M639 128h1M0 129h1M231 129h1M479 129h1M639 129h1M0 130h1M231 130h1M479 130h1M639 130h1M0 131h1M231 131h1M479 131h1M639 131h1M0 132h1M231 132h1M479 132h1M639 132h1M0 133h1M231 133h1M479 133h1M639 133h1M0 134h1M231 134h1M479 134h1M639 134h1M0 135h1M232 135h1M479 135h1M639 135h1M0 136h1M232 136h1M479 136h1M639 136h1M0 137h1M232 137h1M479 137h1M639 137h1M0 138h1M232 138h1M479 138h1M639 138h1M0 139h1M232 139h1M479 139h1M639 139h1M0 140h1M232 140h1M479 140h1M639 140h1M0 141h1M232 141h1M479 141h1M639 141h1M0 142h1M232 142h1M479 142h1M639 142h1M0 143h1M232 143h1M479 143h1M639 143h1M0 144h1M232 144h1M479 144h1M639 144h1M0 145h1M232 145h1M479 145h1M639 145h1M0 146h1M232 146h1M479 146h1M639 146h1M0 147h1M232 147h1M479 147h1M639 147h1M0 148h1M232 148h1M479 148h1M639 148h1M0 149h1M233 149h1M479 149h1M639 149h1M0 150h1M233 150h1M479 150h1M639 150h1M0 151h1M233 151h1M479 151h1M639 151h1M0 152h1M233 152h1M479 152h1M639 152h1M0 153h1M233 153h1M479 153h1M639 153h1M0 154h1M233 154h1M479 154h1M639 154h1M0 155h1M233 155h1M479 155h1M639 155h1M0 156h1M233 156h1M479 156h1M639 156h1M0 157h1M233 157h1M479 157h1M639 157h1M0 158h1M233 158h1M479 158h1M639 158h1M0 159h1M233 159h1M479 159h1M639 159h1M0 160h1M233 160h1M479 160h1M639 160h1M0 161h1M233 161h1M479 161h1M639 161h1M0 162h1M233 162h1M479 162h1M639 162h1M0 163h1M234 163h1M479 163h1M639 163h1M0 164h1M234 164h1M479 164h1M639 164h1M0 165h1M234 165h1M479 165h1M639 165h1M0 166h1M234 166h1M479 166h1M639 166h1M0 167h1M234 167h1M479 167h1M639 167h1M0 168h1M234 168h1M479 168h1M639 168h1M0 169h1M234 169h1M479 169h1M639 169h1M0 170h1M234 170h1M479 170h1M639 170h1M0 171h1M234 171h1M479 171h1M639 171h1M0 172h1M234 172h1M479 172h1M639 172h1M0 173h1M234 173h1M479 173h1M639 173h1M0 174h1M234 174h1M479 174h1M639 174h1M0 175h1M234 175h1M479 175h1M639 175h1M0 176h1M234 176h1M479 176h1M639 176h1M0 177h1M235 177h1M479 177h1M639 177h1M0 178h1M235 178h1M479 178h1M639 178h1M0 179h1M235 179h1M479 179h1M639 179h1M0 180h1M235 180h1M479 180h1M639 180h1M0 181h1M235 181h1M479 181h1M639 181h1M0 182h1M235 182h1M479 182h1M639 182h1M0 183h1M235 183h1M479 183h1M639 183h1M0 184h1M235 184h1M479 184h1M639 184h1M0 185h1M235 185h1M479 185h1M639 185h1M0 186h1M235 186h1M479 186h1M639 186h1M0 187h1M235 187h1M479 187h1M639 187h1M0 188h1M235 188h1M479 188h1M639 188h1M0 189h1M235 189h1M479 189h1M639 189h1M0 190h1M235 190h1M479 190h1M639 190h1M0 191h1M236 191h1M479 191h1M639 191h1M0 192h1M236 192h1M479 192h1M639 192h1M0 193h1M236 193h1M479 193h1M639 193h1M0 194h1M236 194h1M479 194h1M639 194h1M0 195h1M236 195h1M479 195h1M639 195h1M0 196h1M236 196h1M479 196h1M639 196h1M0 197h1M236 197h1M479 197h1M639 197h1M0 198h1M236 198h1M479 198h1M639 198h1M0 199h1M236 199h1M479 199h1M639 199h1M0 200h1M236 200h1M479 200h1M639 200h1M0 201h1M236 201h1M479 201h1M639 201h1M0 202h1M236 202h1M479 202h1M639 202h1M0 203h1M236 203h1M479 203h1M639 203h1M0 204h1M236 204h1M479 204h1M639 204h1M0 205h1M237 205h1M479 205h1M639 205h1M0 206h1M237 206h1M479 206h1M639 206h1M0 207h1M237 207h1M479 207h1M639 207h1M0 208h1M237 208h1M479 208h1M639 208h1M0 209h1M237 209h1M479 209h1M639 209h1M0 210h1M237 210h1M479 210h1M639 210h1M0 211h1M237 211h1M479 211h1M639 211h1M0 212h1M237 212h1M479 212h1M639 212h1M0 213h1M237 213h1M479 213h1M639 213h1M0 214h1M237 214h1M479 214h1M639 214h1M0 215h1M237 215h1M479 215h1M639 215h1M0 216h1M237 216h1M479 216h1M639 216h1M0 217h1M237 217h1M479 217h1M639 217h1M0 218h1M237 218h1M479 218h1M639 218h1M0 219h1M238 219h1M479 219h1M639 219h1M0 220h1M238 220h1M479 220h1M639 220h1M0 221h1M238 221h1M479 221h1M639 221h1M0 222h1M238 222h1M479 222h1M639 222h1M0 223h1M238 223h1M479 223h1M639 223h1M0 224h1M238 224h1M479 224h1M639 224h1M0 225h1M238 225h1M479 225h1M639 225h1M0 226h1M238 226h1M479 226h1M639 226h1M0 227h1M238 227h1M479 227h1M639 227h1M0 228h1M238 228h1M479 228h1M639 228h1M0 229h1M238 229h1M479 229h1M639 229h1M0 230h1M238 230h1M479 230h1M639 230h1M0 231h1M238 231h1M479 231h1M639 231h1M0 232h1M238 232h1M479 232h1M639 232h1M0 233h1M239 233h1M479 233h1M639 233h1M0 234h1M239 234h1M479 234h1M639 234h1M0 235h1M239 235h1M479 235h1M639 235h1M0 236h1M239 236h1M479 236h1M639 236h1M0 237h1M239 237h1M479 237h1M639 237h1M0 238h1M239 238h1M479 238h1M639 238h1M0 239h1M2 239h10M13 239h35M85 239h154M240 239h5M246 239h62M309 239h29M339 239h1M341 239h53M431 239h35M467 239h10M479 239h1M639 239h1M0 240h1M239 240h1M479 240h1M639 240h1M0 241h1M239 241h1M479 241h1M639 241h1M0 242h1M479 242h1M639 242h1M0 243h1M239 243h1M479 243h1M639 243h1M0 244h1M239 244h1M479 244h1M639 244h1M0 245h1M239 245h1M479 245h1M639 245h1M0 246h1M240 246h1M479 246h1M639 246h1M0 247h1M240 247h1M479 247h1M639 247h1M0 248h1M240 248h1M479 248h1M639 248h1M0 249h1M240 249h1M479 249h1M639 249h1M0 250h1M240 250h1M479 250h1M639 250h1M0 251h1M240 251h1M479 251h1M639 251h1M0 252h1M240 252h1M479 252h1M639 252h1M0 253h1M240 253h1M479 253h1M639 253h1M0 254h1M240 254h1M479 254h1M639 254h1M0 255h1M240 255h1M479 255h1M639 255h1M0 256h1M240 256h1M479 256h1M639 256h1M0 257h1M240 257h1M479 257h1M639 257h1M0 258h1M240 258h1M479 258h1M639 258h1M0 259h1M240 259h1M479 259h1M639 259h1M0 260h1M241 260h1M479 260h1M639 260h1M0 261h1M241 261h1M479 261h1M639 261h1M0 262h1M241 262h1M479 262h1M639 262h1M0 263h1M241 263h1M479 263h1M639 263h1M0 264h1M241 264h1M479 264h1M639 264h1M0 265h1M241 265h1M479 265h1M639 265h1M0 266h1M241 266h1M479 266h1M639 266h1M0 267h1M241 267h1M479 267h1M639 267h1M0 268h1M241 268h1M479 268h1M639 268h1M0 269h1M241 269h1M479 269h1M639 269h1M0 270h1M241 270h1M479 270h1M639 270h1M0 271h1M241 271h1M479 271h1M639 271h1M0 272h1M241 272h1M479 272h1M639 272h1M0 273h1M241 273h1M479 273h1M639 273h1M0 274h1M242 274h1M479 274h1M639 274h1M0 275h1M242 275h1M479 275h1M639 275h1M0 276h1M242 276h1M479 276h1M639 276h1M0 277h1M242 277h1M479 277h1M639 277h1M0 278h1M242 278h1M479 278h1M639 278h1M0 279h1M242 279h1M479 279h1M639 279h1M0 280h1M242 280h1M479 280h1M639 280h1M0 281h1M242 281h1M479 281h1M639 281h1M0 282h1M242 282h1M479 282h1M639 282h1M0 283h1M242 283h1M479 283h1M639 283h1M0 284h1M242 284h1M479 284h1M639 284h1M0 285h1M242 285h1M479 285h1M639 285h1M0 286h1M242 286h1M479 286h1M639 286h1M0 287h1M242 287h1M479 287h1M639 287h1M0 288h1M243 288h1M479 288h1M639 288h1M0 289h1M243 289h1M479 289h1M639 289h1M0 290h1M243 290h1M479 290h1M639 290h1M0 291h1M243 291h1M479 291h1M639 291h1M0 292h1M243 292h1M479 292h1M639 292h1M0 293h1M243 293h1M479 293h1M639 293h1M0 294h1M243 294h1M479 294h1M639 294h1M0 295h1M243 295h1M479 295h1M639 295h1M0 296h1M479 296h1M639 296h1M0 297h1M243 297h1M479 297h1M639 297h1M0 298h1M243 298h1M479 298h1M639 298h1M0 299h1M243 299h1M479 299h1M639 299h1M0 300h1M243 300h1M479 300h1M639 300h1M0 301h1M243 301h1M479 301h1M639 301h1M0 302h1M244 302h1M479 302h1M639 302h1M0 303h1M244 303h1M479 303h1M639 303h1M0 304h1M244 304h1M479 304h1M639 304h1M0 305h1M244 305h1M479 305h1M639 305h1M0 306h1M244 306h1M479 306h1M639 306h1M0 307h1M244 307h1M479 307h1M639 307h1M0 308h1M244 308h1M479 308h1M639 308h1M0 309h1M244 309h1M479 309h1M639 309h1M0 310h1M244 310h1M479 310h1M639 310h1M0 311h1M244 311h1M479 311h1M639 311h1M0 312h1M244 312h1M479 312h1M639 312h1M0 313h1M244 313h1M479 313h1M639 313h1M0 314h1M244 314h1M479 314h1M639 314h1M0 315h1M244 315h1M479 315h1M639 315h1M0 316h1M245 316h1M479 316h1M639 316h1M0 317h1M245 317h1M479 317h1M639 317h1M0 318h1M245 318h1M479 318h1M639 318h1M0 319h1M245 319h1M479 319h1M639 319h1M0 320h1M245 320h1M479 320h1M639 320h1M0 321h1M245 321h1M479 321h1M639 321h1M0 322h1M245 322h1M479 322h1M639 322h1M0 323h1M245 323h1M479 323h1M639 323h1M0 324h1M245 324h1M479 324h1M639 324h1M0 325h1M245 325h1M479 325h1M639 325h1M0 326h1M245 326h1M479 326h1M639 326h1M0 327h1M245 327h1M479 327h1M639 327h1M0 328h1M245 328h1M479 328h1M639 328h1M0 329h1M245 329h1M479 329h1M639 329h1M0 330h1M246 330h1M479 330h1M639 330h1M0 331h1M246 331h1M479 331h1M639 331h1M0 332h1M246 332h1M479 332h1M639 332h1M0 333h1M246 333h1M479 333h1M639 333h1M0 334h1M246 334h1M479 334h1M639 334h1M0 335h1M246 335h1M479 335h1M639 335h1M0 336h1M246 336h1M479 336h1M639 336h1M0 337h1M246 337h1M479 337h1M639 337h1M0 338h1M246 338h1M479 338h1M639 338h1M0 339h1M246 339h1M479 339h1M639 339h1M0 340h1M246 340h1M479 340h1M639 340h1M0 341h1M246 341h1M479 341h1M639 341h1M0 342h1M246 342h1M479 342h1M639 342h1M0 343h1M246 343h1M479 343h1M639 343h1M0 344h1M247 344h1M479 344h1M639 344h1M0 345h1M247 345h1M479 345h1M639 345h1M0 346h1M247 346h1M479 346h1M639 346h1M0 347h1M247 347h1M479 347h1M639 347h1M0 348h1M247 348h1M479 348h1M639 348h1M0 349h1M479 349h1M639 349h1M0 350h1M247 350h1M479 350h1M639 350h1M0 351h1M247 351h1M479 351h1M639 351h1M0 352h1M247 352h1M479 352h1M639 352h1M0 353h1M247 353h1M479 353h1M639 353h1M0 354h1M247 354h1M479 354h1M639 354h1M0 355h1M247 355h1M479 355h1M639 355h1M0 356h1M247 356h1M479 356h1M639 356h1M0 357h1M247 357h1M479 357h1M639 357h1M0 358h1M248 358h1M479 358h1M639 358h1M0 359h1M248 359h1M479 359h1M639 359h1M0 360h1M248 360h1M479 360h1M639 360h1M0 361h1M248 361h1M479 361h1M639 361h1M0 362h1M248 362h1M479 362h1M639 362h1M0 363h1M248 363h1M479 363h1M639 363h1M0 364h1M248 364h1M479 364h1M639 364h1M0 365h1M248 365h1M479 365h1M639 365h1M0 366h1M248 366h1M479 366h1M639 366h1M0 367h1M248 367h1M479 367h1M639 367h1M0 368h1M248 368h1M479 368h1M639 368h1M0 369h1M248 369h1M479 369h1M639 369h1M0 370h1M248 370h1M479 370h1M639 370h1M0 371h1M248 371h1M479 371h1M639 371h1M0 372h1M249 372h1M479 372h1M639 372h1M0 373h1M249 373h1M479 373h1M639 373h1M0 374h1M249 374h1M479 374h1M639 374h1M0 375h1M249 375h1M479 375h1M639 375h1M0 376h1M249 376h1M479 376h1M639 376h1M0 377h1M249 377h1M479 377h1M639 377h1M0 378h1M249 378h1M479 378h1M639 378h1M0 379h1M249 379h1M479 379h1M639 379h1M0 380h1M249 380h1M479 380h1M639 380h1M0 381h1M249 381h1M479 381h1M639 381h1M0 382h1M249 382h1M479 382h1M639 382h1M0 383h1M249 383h1M479 383h1M639 383h1M0 384h1M249 384h1M479 384h1M639 384h1M0 385h1M249 385h1M479 385h1M639 385h1M0 386h1M250 386h1M479 386h1M639 386h1M0 387h1M250 387h1M479 387h1M639 387h1M0 388h1M250 388h1M479 388h1M639 388h1M0 389h1M250 389h1M479 389h1M639 389h1M0 390h1M250 390h1M479 390h1M639 390h1M0 391h1M250 391h1M479 391h1M639 391h1M0 392h1M250 392h1M479 392h1M639 392h1M0 393h1M250 393h1M479 393h1M639 393h1M0 394h1M479 394h1M639 394h1M0 395h1M479 395h1M639 395h1M0 396h1M479 396h1M639 396h1M0 397h1M479 397h1M639 397h1M0 398h1M479 398h1M639 398h1M0 399h1M479 399h1M639 399h1M0 400h1M479 400h1M639 400h1M0 401h1M479 401h1M639 401h1M0 402h1M479 402h1M639 402h1M0 403h1M479 403h1M639 403h1M0 404h1M479 404h1M639 404h1M0 405h1M479 405h1M639 405h1M0 406h1M479 406h1M639 406h1M0 407h1M479 407h1M639 407h1M0 408h1M479 408h1M639 408h1M0 409h1M479 409h1M639 409h1M0 410h1M479 410h1M639 410h1M0 411h1M479 411h1M639 411h1M0 412h1M251 412h1M479 412h1M639 412h1M0 413h1M251 413h1M479 413h1M639 413h1M0 414h1M479 414h1M639 414h1M0 415h1M479 415h1M639 415h1M0 416h1M479 416h1M639 416h1M0 417h1M479 417h1M639 417h1M0 418h1M479 418h1M639 418h1M0 419h1M252 419h1M479 419h1M639 419h1M0 420h1M252 420h1M479 420h1M639 420h1M0 421h1M252 421h1M479 421h1M639 421h1M0 422h1M252 422h1M479 422h1M639 422h1M0 423h1M252 423h1M479 423h1M639 423h1M0 424h1M479 424h1M639 424h1M0 425h1M479 425h1M639 425h1M0 426h1M479 426h1M639 426h1M0 427h1M479 427h1M639 427h1M0 428h1M253 428h1M479 428h1M639 428h1M0 429h1M253 429h1M479 429h1M639 429h1M0 430h1M479 430h1M639 430h1M0 431h1M253 431h1M479 431h1M639 431h1M0 432h1M253 432h1M479 432h1M639 432h1M0 433h1M253 433h1M479 433h1M639 433h1M0 434h1M253 434h1M479 434h1M639 434h1M0 435h1M253 435h1M479 435h1M639 435h1M0 436h1M253 436h1M479 436h1M639 436h1M0 437h1M253 437h1M479 437h1M639 437h1M0 438h1M253 438h1M479 438h1M639 438h1M0 439h1M253 439h1M479 439h1M639 439h1M0 440h1M253 440h1M479 440h1M639 440h1M0 441h1M253 441h1M479 441h1M639 441h1M0 442h1M254 442h1M479 442h1M639 442h1M0 443h1M254 443h1M479 443h1M639 443h1M0 444h1M254 444h1M479 444h1M639 444h1M0 445h1M254 445h1M479 445h1M639 445h1M0 446h1M254 446h1M479 446h1M639 446h1M0 447h1M254 447h1M479 447h1M639 447h1M0 448h1M254 448h1M479 448h1M639 448h1M0 449h1M254 449h1M479 449h1M639 449h1M0 450h1M254 450h1M479 450h1M639 450h1M0 451h1M254 451h1M479 451h1M639 451h1M0 452h1M254 452h1M479 452h1M639 452h1M0 453h1M254 453h1M479 453h1M639 453h1M0 454h1M254 454h1M479 454h1M639 454h1M0 455h1M254 455h1M479 455h1M639 455h1M0 456h1M255 456h1M479 456h1M639 456h1M0 457h1M255 457h1M479 457h1M639 457h1M0 458h1M255 458h1M479 458h1M639 458h1M0 459h1M255 459h1M479 459h1M639 459h1M0 460h1M255 460h1M479 460h1M639 460h1M0 461h1M255 461h1M479 461h1M639 461h1M0 462h1M255 462h1M479 462h1M639 462h1M0 463h1M255 463h1M479 463h1M639 463h1M0 464h1M255 464h1M479 464h1M639 464h1M0 465h1M479 465h1M639 465h1M0 466h1M255 466h1M479 466h1M639 466h1M0 467h1M255 467h1M479 467h1M639 467h1M0 468h1M255 468h1M479 468h1M639 468h1M0 469h1M255 469h1M479 469h1M639 469h1M0 470h1M256 470h1M479 470h1M639 470h1M0 471h1M256 471h1M479 471h1M639 471h1M0 472h1M256 472h1M479 472h1M639 472h1M0 473h1M256 473h1M479 473h1M639 473h1M0 474h1M256 474h1M479 474h1M639 474h1M0 475h1M256 475h1M479 475h1M639 475h1M0 476h1M256 476h1M479 476h1M639 476h1M0 477h1M479 477h1M639 477h1M0 478h1M479 478h1M639 478h1M0 479h640"/>
<path stroke="#808080" d="M223 49h1M226 49h1M233 49h1M236 49h1M239 49h1M242 49h1M249 49h1M252 49h1M255 49h1M217 50h1M220 50h1M223 50h1M226 50h1M233 50h1M236 50h1M239 50h1M242 50h1M249 50h1M252 50h1M255 50h1M259 50h1M210 51h1M217 51h1M220 51h1M223 51h1M226 51h1M233 51h1M236 51h1M239 51h1M242 51h1M249 51h1M252 51h1M255 51h1M259 51h1M265 51h1M203 52h1M207 52h1M210 52h1M217 52h1M220 52h1M223 52h1M226 52h1M233 52h1M236 52h1M239 52h1M242 52h1M249 52h1M252 52h1M255 52h1M259 52h1M265 52h1M269 52h1M272 52h1M200 53h1M203 53h1M207 53h1M210 53h1M217 53h1M220 53h1M223 53h1M226 53h1M233 53h1M236 53h1M239 53h1M242 53h1M249 53h1M252 53h1M255 53h1M259 53h1M265 53h1M269 53h1M272 53h1M275 53h1M200 54h1M203 54h1M207 54h1M211 54h1M217 54h1M220 54h1M223 54h1M226 54h1M233 54h1M237 54h1M239 54h1M242 54h1M248 54h1M252 54h1M255 54h1M259 54h1M265 54h1M268 54h1M271 54h1M275 54h1M282 54h1M190 55h1M194 55h1M200 55h1M204 55h1M207 55h1M211 55h1M217 55h1M221 55h1M224 55h1M227 55h1M233 55h1M237 55h1M239 55h1M242 55h1M248 55h1M251 55h1M254 55h1M258 55h1M265 55h1M268 55h1M271 55h1M274 55h1M281 55h1M285 55h1M187 56h1M190 56h1M194 56h1M201 56h1M204 56h1M207 56h1M211 56h1M218 56h1M221 56h1M224 56h1M227 56h1M233 56h1M237 56h1M239 56h1M242 56h1M248 56h1M251 56h1M254 56h1M258 56h1M264 56h1M268 56h1M271 56h1M274 56h1M281 56h1M284 56h1M288 56h1M291 56h1M184 57h1M187 57h1M191 57h1M195 57h1M201 57h1M204 57h1M208 57h1M211 57h1M218 57h1M221 57h1M224 57h1M227 57h1M233 57h1M237 57h1M239 57h1M242 57h1M248 57h1M251 57h1M254 57h1M258 57h1M264 57h1M268 57h1M271 57h1M274 57h1M281 57h1M284 57h1M287 57h1M291 57h1M184 58h1M188 58h1M191 58h1M195 58h1M201 58h1M204 58h1M208 58h1M211 58h1M218 58h1M221 58h1M224 58h1M227 58h1M233 58h1M237 58h1M239 58h1M242 58h1M248 58h1M251 58h1M254 58h1M258 58h1M264 58h1M268 58h1M271 58h1M274 58h1M281 58h1M284 58h1M287 58h1M290 58h1M298 58h1M178 59h1M185 59h1M188 59h1M191 59h1M195 59h1M201 59h1M204 59h1M208 59h1M212 59h1M218 59h1M221 59h1M224 59h1M227 59h1M233 59h1M237 59h1M239 59h1M242 59h1M248 59h1M251 59h1M254 59h1M258 59h1M264 59h1M267 59h1M271 59h1M274 59h1M280 59h1M284 59h1M287 59h1M290 59h1M298 59h1M178 60h1M185 60h1M188 60h1M192 60h1M195 60h1M201 60h1M205 60h1M208 60h1M212 60h1M218 60h1M221 60h1M254 60h1M258 60h1M264 60h1M267 60h1M270 60h1M274 60h1M280 60h1M283 60h1M286 60h1M290 60h1M297 60h1M301 60h1M174 61h1M179 61h1M185 61h1M189 61h1M192 61h1M195 61h1M202 61h1M205 61h1M208 61h1M212 61h1M264 61h1M267 61h1M270 61h1M273 61h1M280 61h1M283 61h1M286 61h1M289 61h1M297 61h1M300 61h1M304 61h1M171 62h1M175 62h1M179 62h1M186 62h1M189 62h1M192 62h1M196 62h1M202 62h1M205 62h1M208 62h1M270 62h1M273 62h1M280 62h1M283 62h1M286 62h1M289 62h1M296 62h1M300 62h1M303 62h1M307 62h1M168 63h1M172 63h1M175 63h1M179 63h1M186 63h1M189 63h1M192 63h1M196 63h1M202 63h1M273 63h1M279 63h1M283 63h1M286 63h1M289 63h1M296 63h1M299 63h1M303 63h1M306 63h1M169 64h1M172 64h1M176 64h1M180 64h1M186 64h1M189 64h1M193 64h1M196 64h1M279 64h1M282 64h1M285 64h1M289 64h1M296 64h1M299 64h1M302 64h1M306 64h1M169 65h1M173 65h1M176 65h1M180 65h1M186 65h1M190 65h1M193 65h1M285 65h1M288 65h1M295 65h1M299 65h1M302 65h1M305 65h1M313 65h1M162 66h1M170 66h1M173 66h1M176 66h1M180 66h1M187 66h1M190 66h1M288 66h1M295 66h1M298 66h1M302 66h1M305 66h1M312 66h1M316 66h1M160 67h1M163 67h1M170 67h1M173 67h1M177 67h1M180 67h1M187 67h1M294 67h1M298 67h1M301 67h1M305 67h1M312 67h1M315 67h1M319 67h1M156 68h1M160 68h1M163 68h1M170 68h1M174 68h1M177 68h1M181 68h1M294 68h1M297 68h1M301 68h1M304 68h1M311 68h1M315 68h1M319 68h1M322 68h1M153 69h1M157 69h1M161 69h1M164 69h1M171 69h1M174 69h1M178 69h1M181 69h1M297 69h1M300 69h1M304 69h1M311 69h1M314 69h1M318 69h1M322 69h1M154 70h1M157 70h1M161 70h1M164 70h1M171 70h1M175 70h1M178 70h1M300 70h1M303 70h1M311 70h1M314 70h1M318 70h1M321 70h1M154 71h1M158 71h1M162 71h1M164 71h1M172 71h1M175 71h1M303 71h1M310 71h1M314 71h1M317 71h1M321 71h1M328 71h1M155 72h1M158 72h1M162 72h1M165 72h1M172 72h1M310 72h1M313 72h1M317 72h1M320 72h1M327 72h1M148 73h1M155 73h1M159 73h1M163 73h1M165 73h1M309 73h1M313 73h1M316 73h1M320 73h1M327 73h1M331 73h1M148 74h1M156 74h1M159 74h1M163 74h1M166 74h1M309 74h1M312 74h1M316 74h1M320 74h1M326 74h1M330 74h1M145 75h1M149 75h1M156 75h1M160 75h1M164 75h1M166 75h1M312 75h1M315 75h1M319 75h1M326 75h1M330 75h1M333 75h1M141 76h1M145 76h1M149 76h1M157 76h1M160 76h1M164 76h1M315 76h1M319 76h1M325 76h1M329 76h1M333 76h1M139 77h1M142 77h1M146 77h1M150 77h1M157 77h1M161 77h1M318 77h1M325 77h1M329 77h1M332 77h1M336 77h1M140 78h1M142 78h1M147 78h1M150 78h1M158 78h1M318 78h1M324 78h1M328 78h1M332 78h1M336 78h1M140 79h1M143 79h1M147 79h1M151 79h1M324 79h1M328 79h1M331 79h1M335 79h1M141 80h1M144 80h1M148 80h1M151 80h1M323 80h1M327 80h1M331 80h1M335 80h1M342 80h1M133 81h1M141 81h1M144 81h1M149 81h1M152 81h1M327 81h1M330 81h1M334 81h1M342 81h1M134 82h1M142 82h1M145 82h1M149 82h1M152 82h1M326 82h1M330 82h1M334 82h1M341 82h1M345 82h1M134 83h1M142 83h1M146 83h1M150 83h1M329 83h1M333 83h1M340 83h1M345 83h1M131 84h1M135 84h1M143 84h1M146 84h1M333 84h1M340 84h1M344 84h1M347 84h1M131 85h1M136 85h1M143 85h1M332 85h1M339 85h1M343 85h1M347 85h1M128 86h1M132 86h1M136 86h1M144 86h1M338 86h1M343 86h1M346 86h1M350 86h1M129 87h1M133 87h1M137 87h1M338 87h1M342 87h1M345 87h1M350 87h1M126 88h1M130 88h1M133 88h1M138 88h1M337 88h1M341 88h1M345 88h1M349 88h1M127 89h1M131 89h1M134 89h1M138 89h1M341 89h1M344 89h1M348 89h1M127 90h1M131 90h1M135 90h1M139 90h1M340 90h1M343 90h1M348 90h1M355 90h1M120 91h1M128 91h1M132 91h1M135 91h1M343 91h1M347 91h1M355 91h1M121 92h1M129 92h1M133 92h1M136 92h1M342 92h1M346 92h1M354 92h1M358 92h1M117 93h1M122 93h1M130 93h1M134 93h1M346 93h1M353 93h1M357 93h1M361 93h1M118 94h1M122 94h1M130 94h1M345 94h1M353 94h1M357 94h1M360 94h1M119 95h1M123 95h1M131 95h1M352 95h1M356 95h1M360 95h1M115 96h1M120 96h1M124 96h1M351 96h1M355 96h1M359 96h1M364 96h1M112 97h1M116 97h1M121 97h1M125 97h1M351 97h1M354 97h1M358 97h1M363 97h1M113 98h1M117 98h1M121 98h1M125 98h1M350 98h1M354 98h1M358 98h1M362 98h1M114 99h1M118 99h1M122 99h1M126 99h1M353 99h1M357 99h1M361 99h1M115 100h1M118 100h1M123 100h1M356 100h1M360 100h1M369 100h1M116 101h1M119 101h1M124 101h1M356 101h1M360 101h1M368 101h1M107 102h1M116 102h1M120 102h1M355 102h1M359 102h1M367 102h1M371 102h1M108 103h1M117 103h1M121 103h1M358 103h1M366 103h1M370 103h1M105 104h1M109 104h1M118 104h1M365 104h1M369 104h1M106 105h1M110 105h1M119 105h1M316 105h1M365 105h1M368 105h1M374 105h1M107 106h1M111 106h1M364 106h1M367 106h1M373 106h1M102 107h1M108 107h1M111 107h1M315 107h1M363 107h1M367 107h1M372 107h1M376 107h1M103 108h1M109 108h1M112 108h1M362 108h1M366 108h1M370 108h2M375 108h1M100 109h1M104 109h1M109 109h1M113 109h1M314 109h1M365 109h1M369 109h1M374 109h1M101 110h1M105 110h1M110 110h1M114 110h1M364 110h1M368 110h1M372 110h2M102 111h1M106 111h2M111 111h1M313 111h1M367 111h1M371 111h1M103 112h1M108 112h1M112 112h1M366 112h1M370 112h1M381 112h1M104 113h2M109 113h1M311 113h1M369 113h1M380 113h1M96 114h1M106 114h1M110 114h1M368 114h1M379 114h1M97 115h1M107 115h1M310 115h1M377 115h2M382 115h1M98 116h1M108 116h1M376 116h1M381 116h1M93 117h1M99 117h1M147 117h1M309 117h1M375 117h1M379 117h2M385 117h1M94 118h2M100 118h2M374 118h1M378 118h1M384 118h1M96 119h1M102 119h1M148 119h1M308 119h1M373 119h1M377 119h1M383 119h1M92 120h1M97 120h2M103 120h1M376 120h1M381 120h2M387 120h1M93 121h2M99 121h1M150 121h1M307 121h1M375 121h1M380 121h1M385 121h2M95 122h1M100 122h2M379 122h1M384 122h1M90 123h2M96 123h1M102 123h1M151 123h1M306 123h1M378 123h1M383 123h1M92 124h1M97 124h2M377 124h1M381 124h2M93 125h2M99 125h1M153 125h1M305 125h1M380 125h1M95 126h1M379 126h1M389 126h2M96 127h2M154 127h1M303 127h1M388 127h1M86 128h2M98 128h1M387 128h1M392 128h1M88 129h1M156 129h1M302 129h1M385 129h2M391 129h1M89 130h2M384 130h1M389 130h2M84 131h2M91 131h1M157 131h1M301 131h1M383 131h1M388 131h1M393 131h2M86 132h1M92 132h2M387 132h1M392 132h1M82 133h2M87 133h2M94 133h1M159 133h1M300 133h1M386 133h1M390 133h2M397 133h1M84 134h1M89 134h1M385 134h1M389 134h1M395 134h2M85 135h2M90 135h2M160 135h1M299 135h1M387 135h2M394 135h1M80 136h2M87 136h1M92 136h1M386 136h1M392 136h2M82 137h1M88 137h2M162 137h1M298 137h1M391 137h1M83 138h2M90 138h1M389 138h2M85 139h1M163 139h1M296 139h1M388 139h1M401 139h1M86 140h2M399 140h2M76 141h1M88 141h1M165 141h1M295 141h1M397 141h2M402 141h1M77 142h2M395 142h2M400 142h2M79 143h2M166 143h1M294 143h1M393 143h2M399 143h1M81 144h2M392 144h1M397 144h2M75 145h2M83 145h2M168 145h1M293 145h1M396 145h1M402 145h2M77 146h2M85 146h1M394 146h2M401 146h1M73 147h1M79 147h2M169 147h1M292 147h1M399 147h2M405 147h1M74 148h2M81 148h2M398 148h1M403 148h2M76 149h2M83 149h1M171 149h1M291 149h1M396 149h2M401 149h2M71 150h1M78 150h2M395 150h1M399 150h2M72 151h2M80 151h2M172 151h1M290 151h1M397 151h2M74 152h2M82 152h1M396 152h1M76 153h2M174 153h1M288 153h1M408 153h2M78 154h2M406 154h2M80 155h1M175 155h1M287 155h1M404 155h2M68 156h2M402 156h2M410 156h1M70 157h2M177 157h1M286 157h1M400 157h2M408 157h2M72 158h3M406 158h2M67 159h2M75 159h2M179 159h1M285 159h1M404 159h2M411 159h1M69 160h2M77 160h1M402 160h2M409 160h2M71 161h2M180 161h1M401 161h1M407 161h2M66 162h1M73 162h2M405 162h2M412 162h1M67 163h2M75 163h2M182 163h1M283 163h1M403 163h2M410 163h2M69 164h3M402 164h1M407 164h3M64 165h2M72 165h2M183 165h1M282 165h1M405 165h2M66 166h2M74 166h2M375 166h1M403 166h2M68 167h3M185 167h1M280 167h1M373 167h1M71 168h2M371 168h1M415 168h1M73 169h1M186 169h1M279 169h1M369 169h1M413 169h2M367 170h1M410 170h3M62 171h1M188 171h1M278 171h1M365 171h1M408 171h2M416 171h1M63 172h2M363 172h1M406 172h2M414 172h2M65 173h3M189 173h1M277 173h1M411 173h3M61 174h1M68 174h2M361 174h1M409 174h2M417 174h1M62 175h2M70 175h2M191 175h1M276 175h1M359 175h1M407 175h2M415 175h2M64 176h3M99 176h1M357 176h1M412 176h3M59 177h2M67 177h2M101 177h1M192 177h1M275 177h1M355 177h1M410 177h2M61 178h2M69 178h2M103 178h1M353 178h1M408 178h2M418 178h2M63 179h3M105 179h1M194 179h1M273 179h1M351 179h1M414 179h4M58 180h2M66 180h2M107 180h1M349 180h1M411 180h3M60 181h2M68 181h2M109 181h1M195 181h1M272 181h1M347 181h1M409 181h2M62 182h3M111 182h1M345 182h1M65 183h2M113 183h1M197 183h1M271 183h1M343 183h1M67 184h2M115 184h1M117 184h1M341 184h1M420 184h2M119 185h1M198 185h1M270 185h1M339 185h1M416 185h4M121 186h1M337 186h1M413 186h3M56 187h2M123 187h1M200 187h1M269 187h1M335 187h1M411 187h2M421 187h2M58 188h3M125 188h1M417 188h4M61 189h4M127 189h1M201 189h1M268 189h1M333 189h1M414 189h3M55 190h2M65 190h2M129 190h1M331 190h1M412 190h2M422 190h2M57 191h3M131 191h1M203 191h1M267 191h1M329 191h1M418 191h4M60 192h4M133 192h1M327 192h1M415 192h3M55 193h1M64 193h2M135 193h1M137 193h1M204 193h1M265 193h1M325 193h1M413 193h2M56 194h4M139 194h1M323 194h1M422 194h2M60 195h4M141 195h1M206 195h1M264 195h1M321 195h1M417 195h5M54 196h1M64 196h1M143 196h1M319 196h1M414 196h3M55 197h4M145 197h1M207 197h1M263 197h1M317 197h1M59 198h4M147 198h1M315 198h1M63 199h1M149 199h1M209 199h1M262 199h1M313 199h1M151 200h1M423 200h3M153 201h1M155 201h1M210 201h1M261 201h1M309 201h1M418 201h5M157 202h1M307 202h1M415 202h3M52 203h3M159 203h1M212 203h1M260 203h1M424 203h3M55 204h6M161 204h1M305 204h1M419 204h5M61 205h2M163 205h1M213 205h1M259 205h1M303 205h1M416 205h3M52 206h2M165 206h1M301 206h1M54 207h6M167 207h1M215 207h1M257 207h1M299 207h1M422 207h5M60 208h3M169 208h1M297 208h1M416 208h6M52 209h2M171 209h1M216 209h1M256 209h1M295 209h1M54 210h5M173 210h1M175 210h1M293 210h1M425 210h3M59 211h3M177 211h1M218 211h1M255 211h1M291 211h1M420 211h5M179 212h1M289 212h1M417 212h3M51 213h5M181 213h1M219 213h1M254 213h1M287 213h1M56 214h6M183 214h1M285 214h1M185 215h1M221 215h1M253 215h1M283 215h1M187 216h1M281 216h1M189 217h1M222 217h1M252 217h1M423 217h6M191 218h1M193 218h1M279 218h1M418 218h5M50 219h5M195 219h1M224 219h1M250 219h1M277 219h1M55 220h6M197 220h1M275 220h1M423 220h6M199 221h1M225 221h1M249 221h1M273 221h1M418 221h5M201 222h1M49 223h6M203 223h1M227 223h1M248 223h1M424 223h6M55 224h5M205 224h1M419 224h5M207 225h1M228 225h1M247 225h1M49 226h6M209 226h1M211 226h1M263 226h1M424 226h6M55 227h5M213 227h1M230 227h1M246 227h1M261 227h1M419 227h5M215 228h1M259 228h1M49 229h5M217 229h1M231 229h1M245 229h1M257 229h1M54 230h6M219 230h1M255 230h1M221 231h1M233 231h1M244 231h1M253 231h1M223 232h1M225 233h1M234 233h1M242 233h1M251 233h1M419 233h11M227 234h1M249 234h1M229 235h1M231 235h1M236 235h1M241 235h1M247 235h1M49 236h11M233 236h1M245 236h1M424 236h6M235 237h1M237 237h1M240 237h1M243 237h1M419 237h5M237 238h1M241 238h1M49 239h11M239 239h1M419 239h11M237 240h1M241 240h1M54 241h6M235 241h1M238 241h1M243 241h1M49 242h5M233 242h1M245 242h1M419 242h11M231 243h1M237 243h1M242 243h1M247 243h1M249 243h1M229 244h1M251 244h1M49 245h11M227 245h1M236 245h1M244 245h1M253 245h1M255 246h1M225 247h1M234 247h1M245 247h1M257 247h1M223 248h1M259 248h1M419 248h5M221 249h1M233 249h1M247 249h1M261 249h1M424 249h6M219 250h1M263 250h1M55 251h5M217 251h1M232 251h1M248 251h1M265 251h1M419 251h5M49 252h6M215 252h1M267 252h1M269 252h1M424 252h6M213 253h1M231 253h1M250 253h1M271 253h1M55 254h6M211 254h1M273 254h1M418 254h6M49 255h6M209 255h1M230 255h1M251 255h1M275 255h1M424 255h6M207 256h1M277 256h1M55 257h6M205 257h1M229 257h1M253 257h1M279 257h1M50 258h5M203 258h1M281 258h1M418 258h5M201 259h1M228 259h1M254 259h1M283 259h1M423 259h6M56 260h6M199 260h1M285 260h1M287 260h1M50 261h6M226 261h1M256 261h1M289 261h1M197 262h1M291 262h1M195 263h1M225 263h1M257 263h1M293 263h1M193 264h1M295 264h1M417 264h6M191 265h1M224 265h1M259 265h1M297 265h1M423 265h5M59 266h3M189 266h1M299 266h1M54 267h5M187 267h1M223 267h1M260 267h1M301 267h1M417 267h3M51 268h3M185 268h1M303 268h1M305 268h1M420 268h5M183 269h1M222 269h1M262 269h1M307 269h1M425 269h2M57 270h6M181 270h1M309 270h1M416 270h3M52 271h5M179 271h1M221 271h1M263 271h1M311 271h1M419 271h6M177 272h1M425 272h2M60 273h3M175 273h1M219 273h1M265 273h1M315 273h1M415 273h3M55 274h5M173 274h1M317 274h1M418 274h6M53 275h2M171 275h1M218 275h1M266 275h1M319 275h1M424 275h2M61 276h3M321 276h1M56 277h5M169 277h1M217 277h1M268 277h1M323 277h1M325 277h1M53 278h3M167 278h1M327 278h1M165 279h1M216 279h1M269 279h1M329 279h1M414 279h2M163 280h1M331 280h1M416 280h4M161 281h1M215 281h1M271 281h1M333 281h1M420 281h4M62 282h3M159 282h1M335 282h1M414 282h1M424 282h1M57 283h5M157 283h1M214 283h1M272 283h1M337 283h1M415 283h4M55 284h2M155 284h1M339 284h1M419 284h4M64 285h2M153 285h1M213 285h1M274 285h1M341 285h1M343 285h1M413 285h2M423 285h1M60 286h4M151 286h1M345 286h1M415 286h3M57 287h3M149 287h1M211 287h1M275 287h1M347 287h1M418 287h4M56 288h1M65 288h2M147 288h1M349 288h1M412 288h2M422 288h1M61 289h4M145 289h1M210 289h1M277 289h1M351 289h1M414 289h3M58 290h3M353 290h1M417 290h4M56 291h2M66 291h2M143 291h1M209 291h1M278 291h1M355 291h1M421 291h2M62 292h4M141 292h1M357 292h1M59 293h3M139 293h1M208 293h1M280 293h1M359 293h1M57 294h2M137 294h1M361 294h1M410 294h2M135 295h1M207 295h1M281 295h1M365 295h1M412 295h2M133 296h1M367 296h1M414 296h3M68 297h2M131 297h1M206 297h1M283 297h1M409 297h2M417 297h2M64 298h4M129 298h1M371 298h1M411 298h2M419 298h2M61 299h3M127 299h1M284 299h1M373 299h1M413 299h3M59 300h2M69 300h2M125 300h1M375 300h1M408 300h2M416 300h2M67 301h2M123 301h1M203 301h1M286 301h1M377 301h1M410 301h2M418 301h1M64 302h3M121 302h1M379 302h1M412 302h3M62 303h2M70 303h2M119 303h1M202 303h1M287 303h1M407 303h2M415 303h2M61 304h1M68 304h2M117 304h1M409 304h2M417 304h1M65 305h3M201 305h1M289 305h1M411 305h3M63 306h2M71 306h2M115 306h1M414 306h2M62 307h1M69 307h2M113 307h1M200 307h1M290 307h1M416 307h1M66 308h3M111 308h1M64 309h2M109 309h1M199 309h1M292 309h1M404 309h2M63 310h1M107 310h1M406 310h2M105 311h1M198 311h1M293 311h1M408 311h3M74 312h2M103 312h1M403 312h2M411 312h2M72 313h2M196 313h1M295 313h1M405 313h2M413 313h1M69 314h3M75 314h2M407 314h3M67 315h2M73 315h2M195 315h1M296 315h1M402 315h2M410 315h2M66 316h1M71 316h2M404 316h2M412 316h1M69 317h2M77 317h1M194 317h1M298 317h1M406 317h2M67 318h2M75 318h2M400 318h2M408 318h2M73 319h2M193 319h1M299 319h1M402 319h2M410 319h2M71 320h2M78 320h2M404 320h3M69 321h2M76 321h2M192 321h1M301 321h1M407 321h2M68 322h1M74 322h2M409 322h2M72 323h2M191 323h1M303 323h1M398 323h1M70 324h2M399 324h2M190 325h1M304 325h1M401 325h2M81 326h2M396 326h1M403 326h2M79 327h2M188 327h1M306 327h1M397 327h2M405 327h2M77 328h2M83 328h1M399 328h2M407 328h1M75 329h2M81 329h2M187 329h1M307 329h1M395 329h1M401 329h2M73 330h2M80 330h1M396 330h2M403 330h2M78 331h2M85 331h1M186 331h1M309 331h1M398 331h2M405 331h1M77 332h1M83 332h2M393 332h1M400 332h2M75 333h2M82 333h1M185 333h1M310 333h1M394 333h2M402 333h2M80 334h2M86 334h1M396 334h2M79 335h1M84 335h2M184 335h1M312 335h1M398 335h2M77 336h2M82 336h2M400 336h2M80 337h2M183 337h1M313 337h1M390 337h1M78 338h2M391 338h2M90 339h1M182 339h1M315 339h1M393 339h1M88 340h2M388 340h1M394 340h2M87 341h1M180 341h1M316 341h1M389 341h2M396 341h1M85 342h2M92 342h1M386 342h1M391 342h1M397 342h2M84 343h1M90 343h2M179 343h1M318 343h1M387 343h2M392 343h2M82 344h2M89 344h1M93 344h1M389 344h1M394 344h1M81 345h1M87 345h2M92 345h1M178 345h1M319 345h1M384 345h1M390 345h2M395 345h2M86 346h1M91 346h1M385 346h2M392 346h1M84 347h2M89 347h2M95 347h1M177 347h1M321 347h1M387 347h1M393 347h2M88 348h1M93 348h2M388 348h2M87 349h1M92 349h1M176 349h1M322 349h1M390 349h1M86 350h1M91 350h1M380 350h1M391 350h2M89 351h2M175 351h1M324 351h1M381 351h2M88 352h1M99 352h1M383 352h1M97 353h2M173 353h1M325 353h1M379 353h1M384 353h2M96 354h1M101 354h1M380 354h2M386 354h1M95 355h1M100 355h1M172 355h1M327 355h1M376 355h1M382 355h1M387 355h2M93 356h2M99 356h1M377 356h2M383 356h1M92 357h1M97 357h2M103 357h1M171 357h1M328 357h1M379 357h1M384 357h2M91 358h1M96 358h1M102 358h1M375 358h1M380 358h2M386 358h1M95 359h1M101 359h1M105 359h1M170 359h1M330 359h1M376 359h1M382 359h1M94 360h1M99 360h2M104 360h1M377 360h1M383 360h2M93 361h1M98 361h1M103 361h1M169 361h1M331 361h1M378 361h2M385 361h1M97 362h1M101 362h2M370 362h1M380 362h1M96 363h1M100 363h1M168 363h1M371 363h1M381 363h1M99 364h1M110 364h1M368 364h1M372 364h1M382 364h1M98 365h1M109 365h1M167 365h1M369 365h1M373 365h1M97 366h1M108 366h1M112 366h1M366 366h1M370 366h1M374 366h2M106 367h2M111 367h1M165 367h1M367 367h1M371 367h1M376 367h1M105 368h1M110 368h1M114 368h1M364 368h1M368 368h1M372 368h2M377 368h1M104 369h1M108 369h2M113 369h1M164 369h1M365 369h1M369 369h1M374 369h1M378 369h1M103 370h1M107 370h1M112 370h1M116 370h1M366 370h1M370 370h1M375 370h1M102 371h1M106 371h1M111 371h1M115 371h1M163 371h1M367 371h1M370 371h1M376 371h1M105 372h1M110 372h1M114 372h1M368 372h1M371 372h1M104 373h1M110 373h1M113 373h1M162 373h1M359 373h1M368 373h1M372 373h1M109 374h1M112 374h1M360 374h1M369 374h1M373 374h1M108 375h1M112 375h1M120 375h1M357 375h1M361 375h1M370 375h1M107 376h1M111 376h1M119 376h1M123 376h1M358 376h1M362 376h1M371 376h1M110 377h1M118 377h1M122 377h1M354 377h1M359 377h1M363 377h1M109 378h1M117 378h1M122 378h1M355 378h1M360 378h1M363 378h1M117 379h1M121 379h1M125 379h1M352 379h1M356 379h1M361 379h1M364 379h1M116 380h1M120 380h1M124 380h1M128 380h1M353 380h1M357 380h1M361 380h1M365 380h1M115 381h1M120 381h1M124 381h1M127 381h1M354 381h1M358 381h1M362 381h1M366 381h1M114 382h1M119 382h1M123 382h1M127 382h1M354 382h1M358 382h1M363 382h1M118 383h1M122 383h1M126 383h1M347 383h1M355 383h1M359 383h1M118 384h1M121 384h1M125 384h1M133 384h1M348 384h1M356 384h1M360 384h1M117 385h1M121 385h1M125 385h1M132 385h1M344 385h1M349 385h1M357 385h1M361 385h1M120 386h1M124 386h1M132 386h1M136 386h1M342 386h1M345 386h1M349 386h1M357 386h1M123 387h1M131 387h1M135 387h1M343 387h1M346 387h1M350 387h1M358 387h1M123 388h1M130 388h1M135 388h1M138 388h1M339 388h1M343 388h1M347 388h1M351 388h1M130 389h1M134 389h1M137 389h1M340 389h1M344 389h1M348 389h1M352 389h1M129 390h1M133 390h1M137 390h1M141 390h1M340 390h1M345 390h1M348 390h1M352 390h1M128 391h1M133 391h1M136 391h1M140 391h1M341 391h1M345 391h1M349 391h1M128 392h1M132 392h1M135 392h1M140 392h1M334 392h1M342 392h1M346 392h1M350 392h1M131 393h1M135 393h1M139 393h1M146 393h1M331 393h1M335 393h1M342 393h1M347 393h1M131 394h1M134 394h1M138 394h1M145 394h1M332 394h1M335 394h1M343 394h1M347 394h1M133 395h1M138 395h1M145 395h1M149 395h1M328 395h1M332 395h1M336 395h1M344 395h1M133 396h1M137 396h1M144 396h1M148 396h1M152 396h1M326 396h1M329 396h1M333 396h1M336 396h1M344 396h1M136 397h1M144 397h1M148 397h1M151 397h1M327 397h1M329 397h1M334 397h1M337 397h1M345 397h1M136 398h1M143 398h1M147 398h1M151 398h1M155 398h1M327 398h1M330 398h1M334 398h1M337 398h1M143 399h1M147 399h1M150 399h1M154 399h1M320 399h1M328 399h1M331 399h1M335 399h1M338 399h1M142 400h1M146 400h1M150 400h1M154 400h1M321 400h1M328 400h1M331 400h1M336 400h1M338 400h1M142 401h1M146 401h1M149 401h1M153 401h1M160 401h1M317 401h1M321 401h1M329 401h1M332 401h1M336 401h1M141 402h1M145 402h1M149 402h1M153 402h1M159 402h1M163 402h1M314 402h1M318 402h1M322 402h1M329 402h1M333 402h1M145 403h1M148 403h1M152 403h1M159 403h1M163 403h1M166 403h1M312 403h1M315 403h1M318 403h1M322 403h1M330 403h1M333 403h1M148 404h1M152 404h1M158 404h1M162 404h1M166 404h1M312 404h1M315 404h1M319 404h1M323 404h1M330 404h1M147 405h1M151 405h1M158 405h1M162 405h1M165 405h1M169 405h1M313 405h1M316 405h1M319 405h1M323 405h1M331 405h1M151 406h1M158 406h1M161 406h1M165 406h1M168 406h1M306 406h1M313 406h1M316 406h1M320 406h1M324 406h1M150 407h1M157 407h1M161 407h1M164 407h1M168 407h1M175 407h1M303 407h1M306 407h1M314 407h1M317 407h1M320 407h1M324 407h1M157 408h1M160 408h1M164 408h1M167 408h1M175 408h1M178 408h1M300 408h1M303 408h1M307 408h1M314 408h1M317 408h1M321 408h1M325 408h1M156 409h1M160 409h1M164 409h1M167 409h1M174 409h1M178 409h1M181 409h1M297 409h1M300 409h1M304 409h1M307 409h1M314 409h1M318 409h1M321 409h1M156 410h1M159 410h1M163 410h1M167 410h1M174 410h1M177 410h1M181 410h1M184 410h1M297 410h1M301 410h1M304 410h1M308 410h1M315 410h1M318 410h1M322 410h1M159 411h1M163 411h1M166 411h1M173 411h1M177 411h1M180 411h1M184 411h1M291 411h1M298 411h1M301 411h1M305 411h1M308 411h1M315 411h1M319 411h1M162 412h1M166 412h1M173 412h1M176 412h1M180 412h1M183 412h1M190 412h1M288 412h1M291 412h1M298 412h1M302 412h1M305 412h1M308 412h1M316 412h1M165 413h1M173 413h1M176 413h1M179 413h1M183 413h1M190 413h1M193 413h1M285 413h1M288 413h1M292 413h1M298 413h1M302 413h1M305 413h1M309 413h1M165 414h1M172 414h1M176 414h1M179 414h1M182 414h1M189 414h1M193 414h1M196 414h1M282 414h1M285 414h1M289 414h1M292 414h1M299 414h1M302 414h1M306 414h1M309 414h1M172 415h1M175 415h1M179 415h1M182 415h1M189 415h1M192 415h1M195 415h1M199 415h1M276 415h1M282 415h1M286 415h1M289 415h1M292 415h1M299 415h1M303 415h1M306 415h1M310 415h1M171 416h1M175 416h1M178 416h1M182 416h1M189 416h1M192 416h1M195 416h1M198 416h1M205 416h1M208 416h1M270 416h1M273 416h1M276 416h1M282 416h1M286 416h1M289 416h1M293 416h1M299 416h1M303 416h1M307 416h1M174 417h1M178 417h1M181 417h1M188 417h1M192 417h1M195 417h1M198 417h1M205 417h1M208 417h1M211 417h1M214 417h1M260 417h1M266 417h1M270 417h1M273 417h1M276 417h1M283 417h1M286 417h1M290 417h1M293 417h1M299 417h1M304 417h1M177 418h1M181 418h1M188 418h1M191 418h1M195 418h1M198 418h1M204 418h1M208 418h1M211 418h1M214 418h1M220 418h1M254 418h1M257 418h1M260 418h1M266 418h1M270 418h1M273 418h1M277 418h1M283 418h1M287 418h1M290 418h1M293 418h1M300 418h1M177 419h1M180 419h1M188 419h1M191 419h1M194 419h1M198 419h1M204 419h1M207 419h1M211 419h1M214 419h1M220 419h1M224 419h1M227 419h1M230 419h1M236 419h1M239 419h1M241 419h1M245 419h1M251 419h1M254 419h1M257 419h1M260 419h1M266 419h1M270 419h1M274 419h1M277 419h1M283 419h1M287 419h1M290 419h1M293 419h1M300 419h1M180 420h1M188 420h1M191 420h1M194 420h1M197 420h1M204 420h1M207 420h1M210 420h1M214 420h1M220 420h1M224 420h1M227 420h1M230 420h1M236 420h1M239 420h1M241 420h1M245 420h1M251 420h1M254 420h1M257 420h1M260 420h1M267 420h1M270 420h1M274 420h1M277 420h1M283 420h1M287 420h1M290 420h1M294 420h1M187 421h1M191 421h1M194 421h1M197 421h1M204 421h1M207 421h1M210 421h1M214 421h1M220 421h1M224 421h1M227 421h1M230 421h1M236 421h1M239 421h1M241 421h1M245 421h1M251 421h1M254 421h1M257 421h1M260 421h1M267 421h1M270 421h1M274 421h1M277 421h1M283 421h1M287 421h1M291 421h1M294 421h1M187 422h1M190 422h1M194 422h1M197 422h1M204 422h1M207 422h1M210 422h1M214 422h1M220 422h1M224 422h1M227 422h1M230 422h1M236 422h1M239 422h1M241 422h1M245 422h1M251 422h1M254 422h1M257 422h1M260 422h1M267 422h1M271 422h1M274 422h1M277 422h1M284 422h1M288 422h1M291 422h1M190 423h1M193 423h1M197 423h1M204 423h1M207 423h1M210 423h1M213 423h1M219 423h1M224 423h1M227 423h1M230 423h1M236 423h1M239 423h1M241 423h1M245 423h1M251 423h1M254 423h1M258 423h1M261 423h1M267 423h1M271 423h1M274 423h1M278 423h1M284 423h1M196 424h1M203 424h1M207 424h1M210 424h1M213 424h1M219 424h1M223 424h1M226 424h1M229 424h1M236 424h1M239 424h1M242 424h1M245 424h1M252 424h1M255 424h1M258 424h1M261 424h1M267 424h1M271 424h1M275 424h1M278 424h1M203 425h1M206 425h1M209 425h1M213 425h1M219 425h1M223 425h1M226 425h1M229 425h1M236 425h1M239 425h1M242 425h1M245 425h1M252 425h1M255 425h1M258 425h1M261 425h1M268 425h1M271 425h1M275 425h1M278 425h1M203 426h1M206 426h1M209 426h1M213 426h1M219 426h1M223 426h1M226 426h1M229 426h1M236 426h1M239 426h1M242 426h1M245 426h1M252 426h1M255 426h1M258 426h1M261 426h1M268 426h1M271 426h1M213 427h1M219 427h1M223 427h1M226 427h1M229 427h1M236 427h1M239 427h1M242 427h1M245 427h1M252 427h1M255 427h1M258 427h1M261 427h1M268 427h1M219 428h1M223 428h1M226 428h1M229 428h1M236 428h1M239 428h1M242 428h1M245 428h1M252 428h1M255 428h1M258 428h1M261 428h1M223 429h1M226 429h1M229 429h1M236 429h1M239 429h1M242 429h1M245 429h1M252 429h1M255 429h1"/>
<path stroke="#ff0000" d="M200 29h3M198 30h2M203 30h2M173 31h5M198 31h1M204 31h1M172 32h1M178 32h1M197 32h1M205 32h1M171 33h1M179 33h1M197 33h1M201 33h1M205 33h1M170 34h1M180 34h1M197 34h1M205 34h1M169 35h1M181 35h1M198 35h1M204 35h1M169 36h1M181 36h1M198 36h2M203 36h2M169 37h1M181 37h1M200 37h3M169 38h1M181 38h1M169 39h1M181 39h1M170 40h1M180 40h1M171 41h1M179 41h1M171 42h1M179 42h1M167 43h1M171 43h1M179 43h1M168 44h1M170 44h1M180 44h1M169 45h1M181 45h1M182 46h1M183 47h1M303 79h1M297 80h2M302 80h1M299 81h1M302 81h1M299 82h1M302 82h1M298 83h1M302 83h1M298 84h1M302 84h1M297 85h1M302 85h1M297 86h8M302 87h1M272 90h1M271 91h1M261 92h2M270 92h1M263 93h1M270 93h1M264 94h1M270 94h1M264 95h1M270 95h1M264 96h1M270 96h1M263 97h1M270 97h1M263 98h1M270 98h1M262 99h1M270 99h1M262 100h1M270 100h1M261 101h1M270 101h1M261 102h1M270 102h1M260 103h1M270 103h1M260 104h15M270 105h1M270 106h1M261 120h1M260 121h3M261 122h1M260 126h1M261 127h1M261 128h1M262 129h1M263 130h1M263 131h1M264 132h1M265 133h1M265 134h1M266 135h1M267 136h1M268 137h1M268 138h1M627 138h3M269 139h1M626 139h1M630 139h1M270 140h1M626 140h1M630 140h1M270 141h1M624 141h4M629 141h4M271 142h1M272 143h1M624 143h9M272 144h1M273 145h1M274 146h1M274 147h1M275 148h1M276 149h1M276 150h1M277 151h1M278 152h1M279 153h1M279 154h1M280 155h1M281 156h1M281 157h1M282 158h1M283 159h1M283 160h1M284 161h1M285 162h1M285 163h1M286 164h1M287 165h1M287 166h1M288 167h1M289 168h1M290 169h1M290 170h1M291 171h1M292 172h1M292 173h1M293 174h1M294 175h1M294 176h1M624 176h1M632 176h1M295 177h1M625 177h1M631 177h1M296 178h1M626 178h1M630 178h1M296 179h1M626 179h1M630 179h1M297 180h1M624 180h9M298 181h1M626 181h1M630 181h1M298 182h1M626 182h1M630 182h1M299 183h1M625 183h1M631 183h1M300 184h1M624 184h1M632 184h1M301 185h1M301 186h1M302 187h1M303 188h1M303 189h1M304 190h1M305 191h1M305 192h1M306 193h1M307 194h1M307 195h1M308 196h1M309 197h1M309 198h1M310 199h1M311 200h1M311 201h1M312 202h1M313 203h1M314 204h1M314 205h1M315 206h1M316 207h1M316 208h1M317 209h1M318 210h1M318 211h1M319 212h1M320 213h1M320 214h1M321 215h1M322 216h1M625 216h1M632 216h1M322 217h1M626 217h6M323 218h1M352 218h1M627 218h1M630 218h1M324 219h1M627 219h1M630 219h1M325 220h1M351 220h1M627 220h1M630 220h1M325 221h1M627 221h1M630 221h1M326 222h1M349 222h1M627 222h1M630 222h1M327 223h1M626 223h6M327 224h1M348 224h1M625 224h1M632 224h1M328 225h1M329 226h1M346 226h1M329 227h1M330 228h1M345 228h1M331 229h1M331 230h1M343 230h1M332 231h1M333 232h1M342 232h1M333 233h1M334 234h1M341 234h1M335 235h1M336 236h1M339 236h1M336 237h1M337 238h2M338 239h1M336 240h1M338 240h1M339 241h1M335 242h1M340 242h1M340 243h1M333 244h1M341 244h1M342 245h1M332 246h1M342 246h1M343 247h1M330 248h1M344 248h1M344 249h1M329 250h1M345 250h1M346 251h1M328 252h1M347 252h1M347 253h1M326 254h1M348 254h1M74 255h3M349 255h1M379 255h5M75 256h2M325 256h1M349 256h1M377 256h2M384 256h2M74 257h1M76 257h1M350 257h1M376 257h1M386 257h1M70 258h2M73 258h1M323 258h1M351 258h1M375 258h1M387 258h1M69 259h1M72 259h1M351 259h1M374 259h1M388 259h1M68 260h1M73 260h1M322 260h1M352 260h1M357 260h1M374 260h1M388 260h1M68 261h1M73 261h1M356 261h3M373 261h1M389 261h1M69 262h1M72 262h1M320 262h1M357 262h1M373 262h1M389 262h1M70 263h2M373 263h1M381 263h1M389 263h1M319 264h1M373 264h1M389 264h1M373 265h1M389 265h1M318 266h1M374 266h1M388 266h1M627 266h3M374 267h1M388 267h1M625 267h2M630 267h2M316 268h1M375 268h1M387 268h1M625 268h1M631 268h1M376 269h1M386 269h1M624 269h1M632 269h1M315 270h1M377 270h2M384 270h2M624 270h1M628 270h1M632 270h1M379 271h5M624 271h1M632 271h1M313 272h1M625 272h1M631 272h1M625 273h2M630 273h2M312 274h1M627 274h3M438 275h3M448 275h3M310 276h1M437 276h1M441 276h1M447 276h1M451 276h1M436 277h1M442 277h1M446 277h1M452 277h1M309 278h1M436 278h1M442 278h1M446 278h1M452 278h1M436 279h1M442 279h1M446 279h1M452 279h1M307 280h1M437 280h1M443 280h1M445 280h1M451 280h1M438 281h1M443 281h1M445 281h1M450 281h1M306 282h1M443 282h1M445 282h1M444 283h1M305 284h1M444 284h1M444 285h1M303 286h1M444 286h1M444 287h1M302 288h1M444 288h1M444 289h1M300 290h1M444 290h1M444 291h1M299 292h1M297 294h1M296 296h1M343 298h1M342 299h3M293 300h1M343 300h1M292 302h1M290 304h1M439 305h3M289 306h1M440 306h2M630 306h3M439 307h1M441 307h1M631 307h2M287 308h1M363 308h6M435 308h2M438 308h1M630 308h1M632 308h1M367 309h2M434 309h1M437 309h1M626 309h2M629 309h1M286 310h1M366 310h1M368 310h1M433 310h1M438 310h1M625 310h1M628 310h1M365 311h1M368 311h1M433 311h1M438 311h1M624 311h1M629 311h1M284 312h1M364 312h1M368 312h1M434 312h1M437 312h1M624 312h1M629 312h1M363 313h1M368 313h1M435 313h2M625 313h1M628 313h1M283 314h1M355 314h5M362 314h1M626 314h2M354 315h1M360 315h2M282 316h1M353 316h1M361 316h1M631 316h1M352 317h1M362 317h1M625 317h2M630 317h1M280 318h1M352 318h1M362 318h1M627 318h1M630 318h1M352 319h1M362 319h1M627 319h1M630 319h1M279 320h1M352 320h1M362 320h1M626 320h1M630 320h1M352 321h1M362 321h1M626 321h1M630 321h1M277 322h1M353 322h1M361 322h1M625 322h1M630 322h1M354 323h1M360 323h1M625 323h8M276 324h1M355 324h5M630 324h1M274 326h1M273 328h1M272 330h1M270 332h1M269 334h1M267 336h1M266 338h1M264 340h1M263 342h1M261 344h1M260 346h1M259 348h1M257 350h1M256 352h1M355 355h3M353 356h2M358 356h2M353 357h1M359 357h1M352 358h1M360 358h1M352 359h1M356 359h1M360 359h1M352 360h1M360 360h1M353 361h1M359 361h1M353 362h2M358 362h2M355 363h3M82 371h1M76 372h2M81 372h1M78 373h1M81 373h1M78 374h1M81 374h1M77 375h1M81 375h1M77 376h1M81 376h1M76 377h1M81 377h1M76 378h8M81 379h1M103 387h5M106 388h2M105 389h1M107 389h1M104 390h1M107 390h1M103 391h1M107 391h1M102 392h1M93 393h1M101 393h1M94 394h1M100 394h1M95 395h1M99 395h1M96 396h1M98 396h1M97 397h1M96 398h1M98 398h1M95 399h1M99 399h1M94 400h1M100 400h1M93 401h1M101 401h1M92 402h1M91 403h1"/>
<path stroke="#ffff00" d="M202 71h1M200 72h5M202 73h1M202 74h1M204 74h2M202 75h2M206 75h1M202 76h1M206 76h1M202 77h1M205 77h1M202 78h1M205 78h1M206 79h1M75 91h1M79 91h1M83 91h1M76 92h1M78 92h1M80 92h1M82 92h1M84 92h1M77 93h1M81 93h1M85 93h1M89 93h1M77 94h1M81 94h1M85 94h1M88 94h2M77 95h1M81 95h1M85 95h1M87 95h1M89 95h1M77 96h1M81 96h1M85 96h2M89 96h1M77 97h1M81 97h1M85 97h1M89 97h1M77 98h1M81 98h1M85 98h1M89 98h1M77 99h1M81 99h1M85 99h1M89 99h1M77 100h1M81 100h1M85 100h1M89 100h1M77 101h1M81 101h1M85 101h1M89 101h1M77 102h1M81 102h1M85 102h1M89 102h1M77 103h1M81 103h1M85 103h1M89 103h1M77 104h1M81 104h1M86 104h1M88 104h1M77 105h1M81 105h1M87 105h1M86 106h1M88 106h1M85 107h1M89 107h1M624 146h1M626 146h1M628 146h1M625 147h1M627 147h1M629 147h1M625 148h1M627 148h1M629 148h1M625 149h1M627 149h1M629 149h1M625 150h1M627 150h1M629 150h1M625 151h1M627 151h1M629 151h1M625 152h1M627 152h1M629 152h1M632 152h1M625 153h1M627 153h1M629 153h1M632 153h1M630 154h2M40 165h3M39 166h1M43 166h1M39 167h1M43 167h1M433 167h1M445 167h1M39 168h1M43 168h1M434 168h1M444 168h1M40 169h3M434 169h1M444 169h1M41 170h1M435 170h2M442 170h2M39 171h5M437 171h5M41 172h1M435 172h2M442 172h2M41 173h1M434 173h1M444 173h1M434 174h1M444 174h1M433 175h1M445 175h1M433 176h1M445 176h1M433 177h1M445 177h1M433 178h1M445 178h1M433 179h1M445 179h1M434 180h1M444 180h1M434 181h1M444 181h1M435 182h2M442 182h2M437 183h5M625 186h2M630 186h2M624 187h1M627 187h1M629 187h1M632 187h1M624 188h1M627 188h1M629 188h1M632 188h1M625 189h1M627 189h1M629 189h1M631 189h1M628 190h1M628 191h1M628 192h1M628 193h1M628 194h1M444 197h3M443 198h1M447 198h1M443 199h1M447 199h1M443 200h1M447 200h1M444 201h3M445 202h1M443 203h5M378 204h5M445 204h1M377 205h1M383 205h1M445 205h1M376 206h1M384 206h1M376 207h1M384 207h1M376 208h1M384 208h1M376 209h1M384 209h1M376 210h1M384 210h1M377 211h1M383 211h1M378 212h5M380 213h1M380 214h1M380 215h1M405 215h3M357 216h1M376 216h9M404 216h1M408 216h1M356 217h3M380 217h1M404 217h1M408 217h1M357 218h1M380 218h1M404 218h1M408 218h1M380 219h1M405 219h3M380 220h1M406 220h1M404 221h5M406 222h1M406 223h1M627 226h3M626 227h1M630 227h1M625 228h1M631 228h1M625 229h1M631 229h1M625 230h1M631 230h1M626 231h1M630 231h1M624 232h1M626 232h1M630 232h1M625 233h1M631 233h1M632 234h1M374 274h1M374 275h1M370 276h9M374 277h1M374 278h1M374 279h1M351 280h1M374 280h1M378 280h3M350 281h3M374 281h1M377 281h1M381 281h1M351 282h1M374 282h3M382 282h1M345 283h1M374 283h1M382 283h1M374 284h1M382 284h1M374 285h1M381 285h1M343 286h1M374 286h1M380 286h1M374 287h1M380 287h1M342 288h1M374 288h1M380 288h1M381 289h1M382 290h1M340 292h1M627 296h3M626 297h1M630 297h1M626 298h1M630 298h1M626 299h1M630 299h1M627 300h3M628 301h1M626 302h5M628 303h1M628 304h1M627 326h1M625 327h5M627 328h1M627 329h1M629 329h2M627 330h2M631 330h1M627 331h1M631 331h1M627 332h1M630 332h1M627 333h1M630 333h1M103 334h3M631 334h1M102 335h1M106 335h1M102 336h1M106 336h1M102 337h1M106 337h1M103 338h3M104 339h1M102 340h5M104 341h1M104 342h1M168 433h1M166 434h5M168 435h1M168 436h1M170 436h2M189 436h1M195 436h1M199 436h3M168 437h2M172 437h1M188 437h2M195 437h2M198 437h1M202 437h1M168 438h1M172 438h1M187 438h1M189 438h1M195 438h1M197 438h1M203 438h1M168 439h1M171 439h1M189 439h1M194 439h1M196 439h1M203 439h1M168 440h1M171 440h1M189 440h1M193 440h1M197 440h1M203 440h1M172 441h1M189 441h1M193 441h1M198 441h1M202 441h1M189 442h1M193 442h1M199 442h3M189 443h1M193 443h1M200 443h1M189 444h1M193 444h1M201 444h1M190 445h1M192 445h1M202 445h1M191 446h1M203 446h1M191 447h1M203 447h1M191 448h1M203 448h1M191 449h1M203 449h1M191 450h1M203 450h1M202 451h1M201 452h1"/>
<path stroke="#00ff00" d="M101 75h1M105 75h1M373 75h1M387 75h1M102 76h3M374 76h1M386 76h1M101 77h1M105 77h1M375 77h11M101 78h1M105 78h1M377 78h1M383 78h1M101 79h1M105 79h1M377 79h1M383 79h1M102 80h3M377 80h1M383 80h1M103 81h1M377 81h1M383 81h1M101 82h5M377 82h1M383 82h1M103 83h1M377 83h1M383 83h1M377 84h1M383 84h1M377 85h1M383 85h1M377 86h1M383 86h1M377 87h1M383 87h1M377 88h1M383 88h1M375 89h11M374 90h1M386 90h1M373 91h1M387 91h1M397 99h1M401 99h1M398 100h3M397 101h1M401 101h1M397 102h1M401 102h1M397 103h1M401 103h1M398 104h3M399 105h1M397 106h5M399 107h1M119 115h1M125 115h1M120 116h1M124 116h1M120 117h1M122 117h1M124 117h1M120 118h5M120 119h1M122 119h1M124 119h1M119 120h1M122 120h1M125 120h1M121 121h3M121 122h1M123 122h1M122 123h1M262 130h1M262 132h1M263 134h1M264 136h1M265 138h1M265 140h1M266 142h1M267 144h1M268 146h1M268 148h1M269 150h1M270 152h1M271 154h1M355 155h1M367 155h1M271 156h1M356 156h1M366 156h1M630 156h3M357 157h1M365 157h1M631 157h2M272 158h1M357 158h1M365 158h1M630 158h1M632 158h1M357 159h1M361 159h1M365 159h1M625 159h1M629 159h1M273 160h1M357 160h1M361 160h1M365 160h1M626 160h1M628 160h1M357 161h9M627 161h1M274 162h1M357 162h1M361 162h1M365 162h1M626 162h1M628 162h1M357 163h1M361 163h1M365 163h1M625 163h1M629 163h1M274 164h1M356 164h1M361 164h1M366 164h1M624 164h1M355 165h1M361 165h1M367 165h1M275 166h1M361 166h1M360 167h3M276 168h1M359 168h1M363 168h1M359 169h1M363 169h1M277 170h1M359 170h1M363 170h1M360 171h3M277 172h1M278 174h1M341 175h1M279 176h1M340 176h3M341 177h1M280 178h1M280 180h1M281 182h1M334 183h1M282 184h1M283 186h1M332 187h1M283 188h1M284 190h1M32 191h5M330 191h1M31 192h1M37 192h1M285 192h1M30 193h1M38 193h1M30 194h1M38 194h1M286 194h1M30 195h1M38 195h1M329 195h1M31 196h1M37 196h1M286 196h1M625 196h2M630 196h2M26 197h7M36 197h7M624 197h1M627 197h1M629 197h1M632 197h1M287 198h1M624 198h1M627 198h1M629 198h1M632 198h1M327 199h1M625 199h1M627 199h1M629 199h1M631 199h1M288 200h1M628 200h1M26 201h17M628 201h1M289 202h1M628 202h1M325 203h1M628 203h1M289 204h1M628 204h1M290 206h1M323 207h1M291 208h1M292 210h1M321 211h1M292 212h1M293 214h1M319 215h1M294 216h1M295 218h1M317 219h1M295 220h1M296 222h1M316 223h1M297 224h1M298 226h1M314 227h1M298 228h1M299 230h1M312 231h1M300 232h1M301 234h1M310 235h1M301 236h1M624 236h1M626 236h1M628 236h1M625 237h1M627 237h1M629 237h1M631 237h1M302 238h1M625 238h1M627 238h1M629 238h3M308 239h1M625 239h1M627 239h1M629 239h1M631 239h1M303 240h1M625 240h1M627 240h1M629 240h1M631 240h1M625 241h1M627 241h1M629 241h1M631 241h1M304 242h1M625 242h1M627 242h1M629 242h1M631 242h1M306 243h1M625 243h1M627 243h1M630 243h1M304 244h1M629 244h1M631 244h1M305 246h1M304 247h1M306 248h1M307 250h1M302 251h1M307 252h1M308 254h1M301 255h1M309 256h1M310 258h1M299 259h1M310 260h1M311 262h1M297 263h1M312 264h1M313 266h1M295 267h1M313 268h1M314 270h1M293 271h1M315 272h1M316 274h1M291 275h1M316 276h1M317 278h1M289 279h1M318 280h1M343 280h1M346 280h1M334 281h1M337 281h1M340 281h1M319 282h1M328 282h1M331 282h1M288 283h1M319 283h1M322 283h1M325 283h1M310 284h1M313 284h1M316 284h1M319 284h1M301 285h1M304 285h1M307 285h1M292 286h1M295 286h1M298 286h1M320 286h1M397 286h1M401 286h1M626 286h1M630 286h1M286 287h1M289 287h1M338 287h6M398 287h3M627 287h3M277 288h1M280 288h1M283 288h1M321 288h1M326 288h12M397 288h1M401 288h1M626 288h1M630 288h1M268 289h1M271 289h1M274 289h1M314 289h12M397 289h1M401 289h1M626 289h1M630 289h1M259 290h1M262 290h1M265 290h1M303 290h11M322 290h1M397 290h1M401 290h1M626 290h1M630 290h1M250 291h1M253 291h1M256 291h1M284 291h1M291 291h12M398 291h3M627 291h3M244 292h1M247 292h1M279 292h12M322 292h1M399 292h1M628 292h1M235 293h1M238 293h1M241 293h1M268 293h11M397 293h5M626 293h5M226 294h1M229 294h1M232 294h1M256 294h12M323 294h1M399 294h1M628 294h1M217 295h1M220 295h1M223 295h1M244 295h12M282 295h1M208 296h1M211 296h1M214 296h1M233 296h11M324 296h1M328 296h1M331 296h1M334 296h1M337 296h1M202 297h1M205 297h1M221 297h12M304 297h1M307 297h1M310 297h1M313 297h1M316 297h1M319 297h1M322 297h1M325 297h1M193 298h1M196 298h1M199 298h1M210 298h11M280 298h1M283 298h1M286 298h1M289 298h1M292 298h1M295 298h1M298 298h1M301 298h1M325 298h1M184 299h1M187 299h1M190 299h1M198 299h12M256 299h1M259 299h1M262 299h1M265 299h1M268 299h1M271 299h1M274 299h1M277 299h1M280 299h1M175 300h1M178 300h1M181 300h1M186 300h12M232 300h1M235 300h1M238 300h1M241 300h1M244 300h1M247 300h1M250 300h1M253 300h1M325 300h1M166 301h1M169 301h1M172 301h1M175 301h11M208 301h1M211 301h1M214 301h1M217 301h1M220 301h1M223 301h1M226 301h1M229 301h1M160 302h1M163 302h12M184 302h1M187 302h1M190 302h1M193 302h1M196 302h1M199 302h1M202 302h1M205 302h1M326 302h1M151 303h13M166 303h1M169 303h1M172 303h1M175 303h1M178 303h1M181 303h1M278 303h1M145 304h7M154 304h1M157 304h1M327 304h1M328 306h1M276 307h1M328 308h1M329 310h1M275 311h1M333 312h1M332 313h3M333 314h1M273 315h1M271 319h1M269 323h1M345 323h1M353 323h1M346 324h1M352 324h1M347 325h5M346 326h1M352 326h1M267 327h1M345 327h1M353 327h1M345 328h1M353 328h1M345 329h1M353 329h1M345 330h1M353 330h1M265 331h1M345 331h1M353 331h1M346 332h1M352 332h1M347 333h5M349 334h1M263 335h1M349 335h1M349 336h1M625 336h1M631 336h1M345 337h9M626 337h1M630 337h1M349 338h1M626 338h1M628 338h1M630 338h1M262 339h1M349 339h1M626 339h5M626 340h1M628 340h1M630 340h1M625 341h1M628 341h1M631 341h1M627 342h3M260 343h1M627 343h1M629 343h1M628 344h1M258 347h1M256 351h1M176 391h1M180 391h1M177 392h3M176 393h1M180 393h1M176 394h1M180 394h1M176 395h1M180 395h1M177 396h3M178 397h1M176 398h5M178 399h1M299 431h1M305 431h1M311 431h1M298 432h2M304 432h2M310 432h1M298 433h1M300 433h1M304 433h1M306 433h1M310 433h1M297 434h1M300 434h1M303 434h1M306 434h1M309 434h1M296 435h1M300 435h1M302 435h1M306 435h1M308 435h1M296 436h1M301 436h2M307 436h2M295 437h1M301 437h1M307 437h1M274 441h1M280 441h1M299 441h1M305 441h1M311 441h1M275 442h1M279 442h1M298 442h2M304 442h2M310 442h1M275 443h1M277 443h1M279 443h1M298 443h1M300 443h1M304 443h1M306 443h1M310 443h1M275 444h5M297 444h1M300 444h1M303 444h1M306 444h1M309 444h1M275 445h1M277 445h1M279 445h1M296 445h1M300 445h1M302 445h1M306 445h1M308 445h1M274 446h1M277 446h1M280 446h1M296 446h1M301 446h2M307 446h2M276 447h3M295 447h1M301 447h1M307 447h1M276 448h1M278 448h1M277 449h1"/>
<path stroke="#0000ff" d="M281 27h5M278 28h3M286 28h1M277 29h1M287 29h3M276 30h1M286 30h1M290 30h1M275 31h1M285 31h1M291 31h1M285 32h1M291 32h1M277 33h3M285 33h1M291 33h1M276 34h1M280 34h1M286 34h1M290 34h1M275 35h1M281 35h1M287 35h3M275 36h1M281 36h1M275 37h1M281 37h1M291 37h1M307 37h3M276 38h1M280 38h1M290 38h1M306 38h1M310 38h2M277 39h3M289 39h1M307 39h1M311 39h1M280 40h1M286 40h3M308 40h1M312 40h1M281 41h5M308 41h1M312 41h1M308 42h1M312 42h1M307 43h1M311 43h1M306 44h1M310 44h2M307 45h3M371 136h1M374 136h1M377 136h1M371 137h1M373 137h1M375 137h1M377 137h1M371 138h1M374 138h1M377 138h1M372 139h1M376 139h1M373 140h3M374 141h1M372 142h5M374 143h1M374 144h1M626 166h1M629 166h1M632 166h1M625 167h2M628 167h2M631 167h1M625 168h1M627 168h2M630 168h2M624 169h1M627 169h1M630 169h1M626 171h1M629 171h1M632 171h1M625 172h2M628 172h2M631 172h1M625 173h1M627 173h2M630 173h2M624 174h1M627 174h1M630 174h1M335 180h1M333 181h1M331 182h1M76 184h1M79 184h1M82 184h1M329 184h1M75 185h2M78 185h3M82 185h2M327 185h1M76 186h1M79 186h1M82 186h1M325 186h1M77 187h1M79 187h1M81 187h1M78 188h3M323 188h1M79 189h1M321 189h1M77 190h5M319 190h1M79 191h1M317 191h1M79 192h1M315 193h1M313 194h1M311 195h1M307 198h1M305 199h1M303 201h1M301 202h1M299 203h1M297 205h1M295 206h1M625 206h1M631 206h1M293 207h1M626 207h1M630 207h1M627 208h3M626 209h1M630 209h1M289 210h1M625 210h1M631 210h1M287 211h1M625 211h1M631 211h1M285 212h1M625 212h1M631 212h1M626 213h1M630 213h1M283 214h1M627 214h3M281 215h1M279 216h1M277 218h1M275 219h1M273 220h1M271 222h1M269 223h1M267 224h1M265 225h1M263 227h1M261 228h1M259 229h1M257 231h1M255 232h1M253 233h1M251 235h1M249 236h1M247 237h1M245 239h1M243 240h1M241 241h1M239 242h1M237 244h1M235 245h1M233 246h1M231 248h1M627 248h3M229 249h1M626 249h1M630 249h1M227 250h1M626 250h1M630 250h1M624 251h4M629 251h4M225 252h1M223 253h1M624 253h9M221 254h1M219 256h1M217 257h1M215 258h1M213 259h1M211 261h1M209 262h1M207 263h1M205 265h1M203 266h1M201 267h1M199 269h1M197 270h1M195 271h1M30 273h1M33 273h1M36 273h1M193 273h1M30 274h1M32 274h1M34 274h1M36 274h1M191 274h1M30 275h1M33 275h1M36 275h1M189 275h1M31 276h1M35 276h1M626 276h3M32 277h3M187 277h1M625 277h1M629 277h2M33 278h1M185 278h1M626 278h1M630 278h1M31 279h5M183 279h1M627 279h1M631 279h1M33 280h1M181 280h1M627 280h1M631 280h1M33 281h1M627 281h1M631 281h1M179 282h1M626 282h1M630 282h1M177 283h1M625 283h1M629 283h2M175 284h1M626 284h3M173 286h1M171 287h1M169 288h1M348 288h1M347 289h3M167 290h1M348 290h1M165 291h1M363 291h1M369 291h1M375 291h1M163 292h1M363 292h1M369 292h1M375 292h1M362 293h3M367 293h5M374 293h3M161 294h1M363 294h1M369 294h1M375 294h1M31 295h1M35 295h1M39 295h1M159 295h1M363 295h1M369 295h1M375 295h1M32 296h1M34 296h1M36 296h1M38 296h1M40 296h1M157 296h1M364 296h1M369 296h1M374 296h1M33 297h1M37 297h1M41 297h1M155 297h1M364 297h1M369 297h1M374 297h1M33 298h1M37 298h1M41 298h1M365 298h2M369 298h1M372 298h2M33 299h1M37 299h1M41 299h1M153 299h1M367 299h5M33 300h1M37 300h1M41 300h1M151 300h1M369 300h1M33 301h1M37 301h1M41 301h1M149 301h1M369 301h1M33 302h1M37 302h1M41 302h1M369 302h1M33 303h1M37 303h1M41 303h1M147 303h1M365 303h9M33 304h1M37 304h1M41 304h1M369 304h1M33 305h1M37 305h1M41 305h1M369 305h1M33 306h1M37 306h1M41 306h1M46 306h1M141 306h1M369 306h1M33 307h1M37 307h1M41 307h1M45 307h3M140 307h3M369 307h1M33 308h1M37 308h1M41 308h1M46 308h1M141 308h1M33 309h1M37 309h1M41 309h1M46 309h1M42 310h1M45 310h1M43 311h2M117 313h5M116 314h1M122 314h2M115 315h1M124 315h1M116 316h1M125 316h1M117 317h1M126 317h1M118 318h1M126 318h1M118 319h1M127 319h1M119 320h1M127 320h1M119 321h1M127 321h1M119 322h1M127 322h1M118 323h1M127 323h1M118 324h1M126 324h1M117 325h1M126 325h1M116 326h1M125 326h1M115 327h1M124 327h1M116 328h1M122 328h2M117 329h5M625 346h1M628 346h1M631 346h1M624 347h2M627 347h3M631 347h2M625 348h1M628 348h1M631 348h1M626 349h1M628 349h1M630 349h1M627 350h3M628 351h1M626 352h5M628 353h1M628 354h1M256 356h1M625 356h1M628 356h1M631 356h1M255 357h3M625 357h1M627 357h1M629 357h1M631 357h1M256 358h1M625 358h1M628 358h1M631 358h1M626 359h1M630 359h1M627 360h3M628 361h1M626 362h5M628 363h1M628 364h1M387 371h1M403 371h1M388 372h1M402 372h1M253 373h1M258 373h3M265 373h1M389 373h1M401 373h1M253 374h1M257 374h1M261 374h1M265 374h1M390 374h1M400 374h1M253 375h1M257 375h1M261 375h1M265 375h1M390 375h1M400 375h1M253 376h1M257 376h1M261 376h1M265 376h1M391 376h1M399 376h1M253 377h1M258 377h3M265 377h1M391 377h1M399 377h1M254 378h1M264 378h1M391 378h1M399 378h1M254 379h1M264 379h1M387 379h17M255 380h2M262 380h2M391 380h1M399 380h1M257 381h5M391 381h1M399 381h1M259 382h1M391 382h1M399 382h1M259 383h1M390 383h1M400 383h1M259 384h1M390 384h1M400 384h1M255 385h9M389 385h1M401 385h1M259 386h1M388 386h1M402 386h1M259 387h1M387 387h1M403 387h1M259 388h1M259 389h1M372 395h1M375 395h1M378 395h1M371 396h2M374 396h3M378 396h2M372 397h1M375 397h1M378 397h1M373 398h1M375 398h1M377 398h1M273 399h3M374 399h3M272 400h1M276 400h2M375 400h1M273 401h1M277 401h1M373 401h5M274 402h1M278 402h1M375 402h1M274 403h1M278 403h1M375 403h1M274 404h1M278 404h1M273 405h1M277 405h1M272 406h1M276 406h2M273 407h3"/>
<path stroke="#00ffff" d="M336 179h1M336 180h1M336 182h1M336 184h1M336 185h1M336 186h1M336 188h2M336 190h1M337 191h1M336 192h1M336 194h2M336 196h1M337 197h1M336 198h1M336 200h2M336 202h1M338 203h1M336 204h1M336 206h1M338 206h1M336 208h1M338 209h1M337 210h1M337 212h2M337 214h1M338 215h1M337 216h1M337 218h1M339 218h1M337 220h1M339 221h1M337 222h1M337 224h1M339 224h1M337 226h1M339 227h1M337 228h1M337 230h1M339 230h1M337 232h1M340 233h1M337 234h1M337 236h1M340 236h1M340 239h1M337 240h1M337 242h1M337 244h1M340 245h1M337 246h1M337 248h1M340 248h1M337 250h1M341 251h1M337 252h1M337 254h1M341 254h1M337 256h1M341 257h1M337 258h1M337 260h1M341 260h1M337 262h1M341 263h1M337 264h1M337 266h1M342 266h1M338 268h1M342 269h1M338 270h1M338 272h1M342 272h1M338 274h1M342 275h1M338 276h1M338 278h1M342 278h1M338 280h1M343 281h1M345 281h1M338 282h1M343 282h2M342 283h1M338 284h1M341 284h1M343 284h1M340 285h1M338 286h2M337 287h1M338 288h1M341 288h1M335 289h1M333 290h2M338 290h2M332 291h1M337 291h1M331 292h1M338 292h1M330 293h1M335 293h1M328 294h2M333 294h1M338 294h1M327 295h1M326 296h1M338 296h1M329 297h1M323 298h2M322 299h1M327 299h1M321 300h1M320 301h1M318 302h2M323 302h1M317 303h1M321 303h1M316 304h1M147 305h1M315 305h1M319 305h1M149 306h1M313 306h2M317 306h1M151 307h1M312 307h1M153 308h1M155 308h1M311 308h1M315 308h1M157 309h1M310 309h1M313 309h1M159 310h1M308 310h2M161 311h1M307 311h1M311 311h1M163 312h1M306 312h1M309 312h1M165 313h1M305 313h1M167 314h1M303 314h2M307 314h1M169 315h1M302 315h1M305 315h1M171 316h1M173 316h1M301 316h1M175 317h1M300 317h1M303 317h1M177 318h1M299 318h1M301 318h1M179 319h1M297 319h2M181 320h1M296 320h1M299 320h1M183 321h1M295 321h1M297 321h1M185 322h1M294 322h1M187 323h1M292 323h2M295 323h1M189 324h1M191 324h1M291 324h1M293 324h1M193 325h1M290 325h1M195 326h1M289 326h1M291 326h1M197 327h1M287 327h3M199 328h1M286 328h1M201 329h1M285 329h1M287 329h1M203 330h1M284 330h2M205 331h1M282 331h2M207 332h1M281 332h1M283 332h1M209 333h1M211 333h1M280 333h2M213 334h1M279 334h1M215 335h1M277 335h3M217 336h1M276 336h2M219 337h1M275 337h1M221 338h1M274 338h2M223 339h1M272 339h2M225 340h1M271 340h1M227 341h1M229 341h1M270 341h2M231 342h1M269 342h1M233 343h1M267 343h2M235 344h1M266 344h2M237 345h1M265 345h1M239 346h1M264 346h1M241 347h1M262 347h2M243 348h1M261 348h1M245 349h1M247 349h1M260 349h1M249 350h1M259 350h1M251 351h1M257 351h2M253 352h1M255 353h1"/>
</g></svg>
<svg class="hn" width="480" height="480" viewBox="0 0 480 480" style="will-change:transform">
<text transform="translate(76,284) scale(.76,1)" fill="#ff0000" stroke="#ff0000" stroke-width=".12">1</text>
<text transform="translate(119,361) scale(.76,1)" fill="#ffff00" stroke="#ffff00" stroke-width=".12">2</text>
<text transform="translate(202,408) scale(.76,1)" fill="#00ff00" stroke="#00ff00" stroke-width=".12">3</text>
<text transform="translate(298,401) scale(.76,1)" fill="#0000ff" stroke="#0000ff" stroke-width=".12">4</text>
<text transform="translate(370,348) scale(.76,1)" fill="#ff0000" stroke="#ff0000" stroke-width=".12">5</text>
<text transform="translate(403,278) scale(.76,1)" fill="#ffff00" stroke="#ffff00" stroke-width=".12">6</text>
<text transform="translate(402,204) scale(.76,1)" fill="#00ff00" stroke="#00ff00" stroke-width=".12">7</text>
<text transform="translate(359,127) scale(.76,1)" fill="#0000ff" stroke="#0000ff" stroke-width=".12">8</text>
<text transform="translate(276,80) scale(.76,1)" fill="#ff0000" stroke="#ff0000" stroke-width=".12">9</text>
<text transform="translate(180,87) scale(.76,1)" x="-5.26 5.26" fill="#ffff00" stroke="#ffff00" stroke-width=".12">1<tspan class="hs">0</tspan></text>
<text transform="translate(108,140) scale(.76,1)" x="-5.26 5.26" fill="#00ff00" stroke="#00ff00" stroke-width=".12">11</text>
<text transform="translate(75,210) scale(.76,1)" x="-5.26 5.26" fill="#0000ff" stroke="#0000ff" stroke-width=".12">12</text>
</svg>
<div id="sb"><div><span class="cw">Astrolog 5.41G</span></div><div><span class="cl">Chart of the Moment</span></div><div><span class="cw">Sun April 5, 2026</span></div><div><span class="cw"> 8:27:00pm (DT -8:00 GMT)</span></div><div><span class="cl">San Francisco, CA</span></div><div><span class="cl">122°41'00"W 37°79'00"N</span></div><div><span class="cl">Placidus houses.</span></div><div><span class="cl">Tropical, Geocentric.</span></div><div><span class="cw">Julian Day = 2461136.6437</span></div><div><span class="cl">Obliquity = 23°26'09"</span></div><div><span class="cl">Sidereal time:  8:14:01</span></div><div><span class="cl">DeltaT =  95.5343</span></div><div></div><div><span class="cr"> 1st house: </span><span class="cgn">27Lib05</span></div><div><span class="cy"> 2nd house: </span><span class="cb">25Sco16</span></div><div><span class="cgn"> 3rd house: </span><span class="cr">27Sag06</span></div><div><span class="cb"> 4th house: </span><span class="cgn"> 1Aqu17</span></div><div><span class="cr"> 5th house: </span><span class="cb"> 4Pis17</span></div><div><span class="cy"> 6th house: </span><span class="cr"> 3Ari07</span></div><div><span class="cgn"> 7th house: </span><span class="cr">27Ari05</span></div><div><span class="cb"> 8th house: </span><span class="cy">25Tau16</span></div><div><span class="cr"> 9th house: </span><span class="cgn">27Gem06</span></div><div><span class="cy">10th house: </span><span class="cr"> 1Leo17</span></div><div><span class="cgn">11th house: </span><span class="cy"> 4Vir17</span></div><div><span class="cb">12th house: </span><span class="cgn"> 3Lib07</span></div><div></div><div><span class="cr"> Sun: </span><span class="cr">16Ari21</span><span class="cl">  - 0°00'</span></div><div><span class="cb">Moon: </span><span class="cr"> 1Sag58</span><span class="cl">  - 5°08'</span></div><div><span class="cgn">Merc: </span><span class="cb">18Pis42</span><span class="cl">  - 1°59'</span></div><div><span class="cy">Venu: </span><span class="cy"> 7Tau58</span><span class="cl">  - 0°14'</span></div><div><span class="cr">Mars: </span><span class="cb">27Pis08</span><span class="cl">  - 1°01'</span></div><div><span class="cr">Jupi: </span><span class="cb">16Can09</span><span class="cl">  + 0°22'</span></div><div><span class="cy">Satu: </span><span class="cr"> 6Ari11</span><span class="cl">  - 2°08'</span></div><div><span class="cgn">Uran: </span><span class="cy">28Tau59</span><span class="cl">  - 0°10'</span></div><div><span class="cb">Nept: </span><span class="cr"> 2Ari24</span><span class="cl">  - 1°19'</span></div><div><span class="cb">Plut: </span><span class="cgn"> 5Aqu18</span><span class="cl">  - 3°58'</span></div><div></div><div><span class="cl">Fire: 4, Earth: 2,</span></div><div><span class="cl">Air : 1, Water: 3</span></div><div><span class="cl">Car: 4, Fix: 3, Mut: 3</span></div><div><span class="cl">Yang: 5, Yin: 5</span></div><div><span class="cl">M: 3, N: 7, A: 1, D: 9</span></div><div><span class="cl">Ang: 2, Suc: 5, Cad: 3</span></div><div><span class="cl">Learn: 6, Share: 4</span></div></div>
</div></body></html>
